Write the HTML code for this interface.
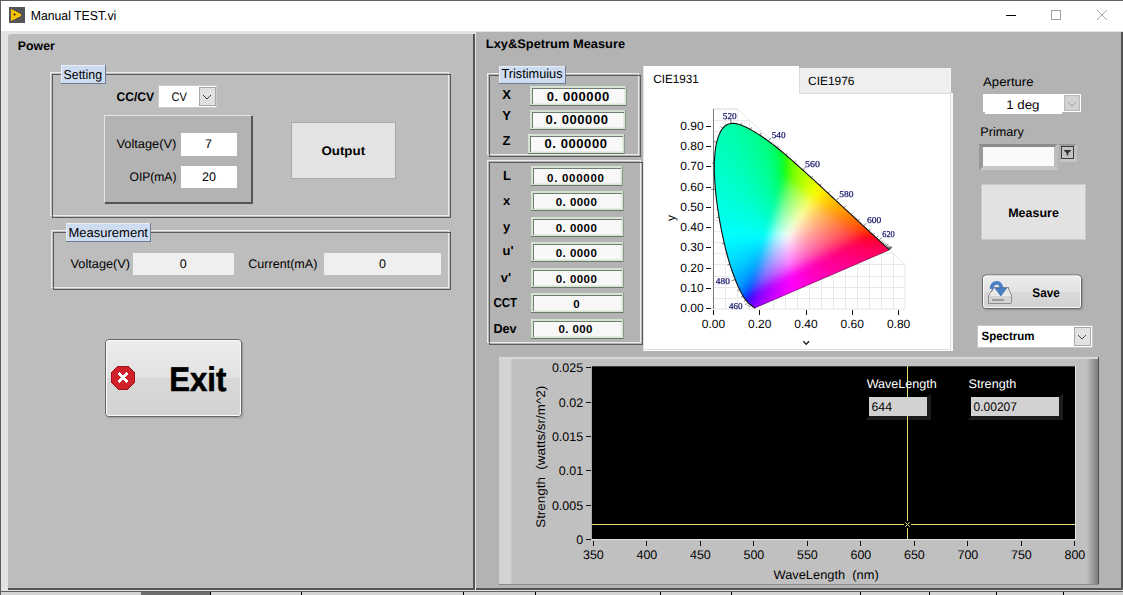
<!DOCTYPE html>
<html><head><meta charset="utf-8"><style>
html,body{margin:0;padding:0;width:1123px;height:595px;overflow:hidden;background:#e3e3e3}
svg{position:absolute;left:0;top:0}
#cie{position:absolute;left:643px;top:93px}
</style></head><body>
<svg width="1123" height="595" viewBox="0 0 1123 595" shape-rendering="crispEdges" text-rendering="geometricPrecision">
<rect x="0" y="0" width="1123" height="595" fill="#e3e3e3" />
<rect x="0" y="0" width="1123" height="31" fill="#ffffff" />
<rect x="0" y="0" width="1123" height="1" fill="#5f5f5f" />
<rect x="0" y="0" width="1" height="595" fill="#5f5f5f" />
<rect x="9" y="7" width="16" height="16" fill="#555555" />
<path d="M10.8 8.6 L22.4 15 L10.8 21.4 Z" fill="#f5c400"/>
<rect x="13" y="14" width="3" height="1" fill="#6a5a20" />
<rect x="14" y="13" width="1" height="3" fill="#6a5a20" />
<text x="30.70" y="19.7" font-size="13" fill="#000" font-family='"Liberation Sans",sans-serif' textLength="85.60" lengthAdjust="spacingAndGlyphs">Manual TEST.vi</text>
<rect x="1006" y="15" width="10" height="1" fill="#000" />
<rect x="1051.5" y="10.5" width="9" height="9" fill="none" stroke="#a0a0a0" stroke-width="1"/>
<line x1="1097" y1="10" x2="1107" y2="20" stroke="#a8a8a8" stroke-width="1" shape-rendering="geometricPrecision"/>
<line x1="1107" y1="10" x2="1097" y2="20" stroke="#a8a8a8" stroke-width="1" shape-rendering="geometricPrecision"/>
<rect x="0" y="591" width="1123" height="1" fill="#5f5f5f" />
<rect x="1" y="592" width="1122" height="3" fill="#d4d4d4" />
<rect x="141" y="592" width="69" height="3" fill="#6e6e6e" />
<rect x="210" y="592" width="1" height="3" fill="#000" />
<rect x="301" y="592" width="1" height="3" fill="#000" />
<rect x="463" y="592" width="1" height="3" fill="#000" />
<rect x="535" y="592" width="1" height="3" fill="#000" />
<rect x="660" y="592" width="1" height="3" fill="#000" />
<rect x="731" y="592" width="1" height="3" fill="#000" />
<rect x="860" y="592" width="1" height="3" fill="#000" />
<rect x="929" y="592" width="1" height="3" fill="#000" />
<rect x="996" y="592" width="1" height="3" fill="#000" />
<rect x="1063" y="592" width="1" height="3" fill="#000" />
<rect x="8" y="34" width="465" height="554" fill="#bdbdbd" rx="3" shape-rendering="geometricPrecision"/>
<rect x="8" y="40" width="465" height="548" fill="#bdbdbd" />
<rect x="14" y="34" width="459" height="10" fill="#bdbdbd" />
<rect x="473" y="34" width="2" height="557" fill="#555555" />
<rect x="475" y="32" width="1" height="559" fill="#e3e3e3" />
<rect x="8" y="588" width="467" height="2" fill="#555555" />
<rect x="8" y="590" width="1115" height="1" fill="#e3e3e3" />
<text x="17.80" y="49.9" font-size="12.5" font-weight="bold" fill="#000" font-family='"Liberation Sans",sans-serif' textLength="37.01" lengthAdjust="spacingAndGlyphs">Power</text>
<rect x="50" y="72" width="398" height="1" fill="#ececec" />
<rect x="50" y="72" width="1" height="143" fill="#ececec" />
<rect x="50" y="215" width="399" height="1" fill="#ececec" />
<rect x="448" y="72" width="1" height="143" fill="#ececec" />
<rect x="52" y="74" width="398" height="1" fill="#5a5a5a" />
<rect x="52" y="74" width="1" height="143" fill="#5a5a5a" />
<rect x="52" y="217" width="399" height="1" fill="#5a5a5a" />
<rect x="450" y="74" width="1" height="143" fill="#5a5a5a" />
<rect x="61" y="65" width="45" height="19" fill="#cddcf0" />
<rect x="61" y="65" width="45" height="1" fill="#e8eff9" />
<rect x="61" y="65" width="1" height="19" fill="#e8eff9" />
<rect x="61" y="83" width="45" height="1" fill="#6f7d94" />
<rect x="105" y="65" width="1" height="19" fill="#6f7d94" />
<text x="63.60" y="78.9" font-size="13" fill="#000" font-family='"Liberation Sans",sans-serif' textLength="38.42" lengthAdjust="spacingAndGlyphs">Setting</text>
<text x="116.40" y="100.7" font-size="12.5" font-weight="bold" fill="#000" font-family='"Liberation Sans",sans-serif' textLength="37.69" lengthAdjust="spacingAndGlyphs">CC/CV</text>
<rect x="158" y="85" width="59" height="23" fill="#cacaca" />
<rect x="159" y="86" width="57" height="21" fill="#ffffff" />
<rect x="199" y="87" width="17" height="19" fill="#a8a8a8" />
<rect x="200" y="88" width="15" height="17" fill="#e1e1e1" />
<path d="M203 95 L207 99 L211 95" fill="none" stroke="#404040" stroke-width="1"/>
<text x="171.50" y="100.8" font-size="12.5" fill="#000" font-family='"Liberation Sans",sans-serif' textLength="15.41" lengthAdjust="spacingAndGlyphs">CV</text>
<rect x="104" y="115" width="149" height="89" fill="#b3b3b3" />
<rect x="104" y="115" width="147" height="1" fill="#e4e4e4" />
<rect x="104" y="115" width="1" height="87" fill="#e4e4e4" />
<rect x="105" y="202" width="148" height="2" fill="#555555" />
<rect x="251" y="116" width="2" height="88" fill="#555555" />
<text x="116.40" y="148.3" font-size="12.5" fill="#000" font-family='"Liberation Sans",sans-serif' textLength="60.02" lengthAdjust="spacingAndGlyphs">Voltage(V)</text>
<rect x="181" y="133" width="56" height="23" fill="#ffffff" />
<text x="205.03" y="148.3" font-size="12.5" fill="#000" font-family='"Liberation Sans",sans-serif' textLength="6.95" lengthAdjust="spacingAndGlyphs">7</text>
<text x="129.50" y="180.9" font-size="12.5" fill="#000" font-family='"Liberation Sans",sans-serif' textLength="46.91" lengthAdjust="spacingAndGlyphs">OIP(mA)</text>
<rect x="181" y="166" width="56" height="22" fill="#ffffff" />
<text x="202.05" y="180.9" font-size="12.5" fill="#000" font-family='"Liberation Sans",sans-serif' textLength="13.90" lengthAdjust="spacingAndGlyphs">20</text>
<rect x="291" y="122" width="105" height="57" fill="#a9a9a9" />
<rect x="292" y="123" width="103" height="55" fill="#e3e3e3" />
<text x="321.40" y="155" font-size="12.5" font-weight="bold" fill="#000" font-family='"Liberation Sans",sans-serif' textLength="43.70" lengthAdjust="spacingAndGlyphs">Output</text>
<rect x="51" y="230" width="397" height="1" fill="#ececec" />
<rect x="51" y="230" width="1" height="57" fill="#ececec" />
<rect x="51" y="287" width="398" height="1" fill="#ececec" />
<rect x="448" y="230" width="1" height="57" fill="#ececec" />
<rect x="53" y="232" width="397" height="1" fill="#5a5a5a" />
<rect x="53" y="232" width="1" height="57" fill="#5a5a5a" />
<rect x="53" y="289" width="398" height="1" fill="#5a5a5a" />
<rect x="450" y="232" width="1" height="57" fill="#5a5a5a" />
<rect x="66" y="223" width="85" height="19" fill="#cddcf0" />
<rect x="66" y="223" width="85" height="1" fill="#e8eff9" />
<rect x="66" y="223" width="1" height="19" fill="#e8eff9" />
<rect x="66" y="241" width="85" height="1" fill="#6f7d94" />
<rect x="150" y="223" width="1" height="19" fill="#6f7d94" />
<text x="68.50" y="236.9" font-size="13" fill="#000" font-family='"Liberation Sans",sans-serif' textLength="79.48" lengthAdjust="spacingAndGlyphs">Measurement</text>
<text x="70.50" y="268" font-size="12.5" fill="#000" font-family='"Liberation Sans",sans-serif' textLength="59.62" lengthAdjust="spacingAndGlyphs">Voltage(V)</text>
<rect x="133" y="253" width="101" height="22" fill="#efefef" />
<text x="179.72" y="268" font-size="12.5" fill="#000" font-family='"Liberation Sans",sans-serif' textLength="6.95" lengthAdjust="spacingAndGlyphs">0</text>
<text x="248.20" y="268" font-size="12.5" fill="#000" font-family='"Liberation Sans",sans-serif' textLength="69.20" lengthAdjust="spacingAndGlyphs">Current(mA)</text>
<rect x="324" y="253" width="117" height="22" fill="#efefef" />
<text x="378.92" y="268" font-size="12.5" fill="#000" font-family='"Liberation Sans",sans-serif' textLength="6.95" lengthAdjust="spacingAndGlyphs">0</text>
<defs><linearGradient id="gbtn" x1="0" y1="0" x2="0" y2="1"><stop offset="0" stop-color="#ececec"/><stop offset="0.5" stop-color="#e2e2e2"/><stop offset="0.5" stop-color="#d9d9d9"/><stop offset="1" stop-color="#d2d2d2"/></linearGradient></defs>
<rect x="106" y="341" width="138" height="78" rx="4" fill="#000" opacity="0.06" shape-rendering="geometricPrecision"/>
<rect x="106" y="340" width="137" height="78" rx="4" fill="#000" opacity="0.08" shape-rendering="geometricPrecision"/>
<rect x="105.5" y="339.5" width="136" height="77" rx="3.5" fill="url(#gbtn)" stroke="#666" stroke-width="1" shape-rendering="geometricPrecision"/>
<rect x="106.5" y="340.5" width="134" height="75" rx="2.5" fill="none" stroke="#fafafa" stroke-width="1" shape-rendering="geometricPrecision"/>
<path d="M118.2 366 L127.8 366 L134.6 372.8 L134.6 382.4 L127.8 389.2 L118.2 389.2 L111.4 382.4 L111.4 372.8 Z" fill="#d0202a" stroke="#a01018" stroke-width="1"/>
<path d="M118.5 373 L127.5 382 M127.5 373 L118.5 382" stroke="#fff" stroke-width="2.6"/>
<g stroke="#000" stroke-width="0.6">
<text x="169.30" y="390.7" font-size="34" font-weight="bold" fill="#000" font-family='"Liberation Sans",sans-serif' textLength="57.01" lengthAdjust="spacingAndGlyphs">Exit</text>
</g>
<rect x="476" y="32" width="646" height="556" fill="#b3b3b3" />
<rect x="1121" y="32" width="2" height="557" fill="#555555" />
<rect x="476" y="588" width="647" height="2" fill="#555555" />
<text x="485.80" y="47.9" font-size="12.5" font-weight="bold" fill="#000" font-family='"Liberation Sans",sans-serif' textLength="139.31" lengthAdjust="spacingAndGlyphs">Lxy&amp;Spetrum Measure</text>
<rect x="487" y="73" width="151" height="1" fill="#ececec" />
<rect x="487" y="73" width="1" height="81" fill="#ececec" />
<rect x="487" y="154" width="152" height="1" fill="#ececec" />
<rect x="638" y="73" width="1" height="81" fill="#ececec" />
<rect x="489" y="75" width="151" height="1" fill="#5a5a5a" />
<rect x="489" y="75" width="1" height="81" fill="#5a5a5a" />
<rect x="489" y="156" width="152" height="1" fill="#5a5a5a" />
<rect x="640" y="75" width="1" height="81" fill="#5a5a5a" />
<rect x="499" y="66" width="67" height="18" fill="#cddcf0" />
<rect x="499" y="66" width="67" height="1" fill="#e8eff9" />
<rect x="499" y="66" width="1" height="18" fill="#e8eff9" />
<rect x="499" y="83" width="67" height="1" fill="#6f7d94" />
<rect x="565" y="66" width="1" height="18" fill="#6f7d94" />
<text x="501.50" y="78.1" font-size="13" fill="#000" font-family='"Liberation Sans",sans-serif' textLength="61.00" lengthAdjust="spacingAndGlyphs">Tristimuius</text>
<text x="502.18" y="98.9" font-size="13" font-weight="bold" fill="#000" font-family='"Liberation Sans",sans-serif' textLength="8.67" lengthAdjust="spacingAndGlyphs">X</text>
<rect x="530" y="86" width="97" height="20" fill="#d6e3d3" />
<rect x="530" y="105" width="97" height="1" fill="#6a7a6a" />
<rect x="626" y="86" width="1" height="20" fill="#8a9a8a" />
<rect x="532" y="88" width="93" height="16" fill="#6e7e6e" />
<rect x="533" y="89" width="92" height="15" fill="#e6eee4" />
<rect x="533" y="89" width="91" height="14" fill="#f8f8f8" />
<text x="502.18" y="120.4" font-size="13" font-weight="bold" fill="#000" font-family='"Liberation Sans",sans-serif' textLength="8.67" lengthAdjust="spacingAndGlyphs">Y</text>
<rect x="530" y="110" width="96" height="20" fill="#d6e3d3" />
<rect x="530" y="129" width="96" height="1" fill="#6a7a6a" />
<rect x="625" y="110" width="1" height="20" fill="#8a9a8a" />
<rect x="532" y="112" width="92" height="16" fill="#6e7e6e" />
<rect x="533" y="113" width="91" height="15" fill="#e6eee4" />
<rect x="533" y="113" width="90" height="14" fill="#f8f8f8" />
<text x="502.52" y="144.7" font-size="13" font-weight="bold" fill="#000" font-family='"Liberation Sans",sans-serif' textLength="7.94" lengthAdjust="spacingAndGlyphs">Z</text>
<rect x="528" y="134" width="97" height="20" fill="#d6e3d3" />
<rect x="528" y="153" width="97" height="1" fill="#6a7a6a" />
<rect x="624" y="134" width="1" height="20" fill="#8a9a8a" />
<rect x="530" y="136" width="93" height="16" fill="#6e7e6e" />
<rect x="531" y="137" width="92" height="15" fill="#e6eee4" />
<rect x="531" y="137" width="91" height="14" fill="#f8f8f8" />
<rect x="487" y="160" width="153" height="1" fill="#ececec" />
<rect x="487" y="160" width="1" height="182" fill="#ececec" />
<rect x="487" y="342" width="154" height="1" fill="#ececec" />
<rect x="640" y="160" width="1" height="182" fill="#ececec" />
<rect x="489" y="162" width="153" height="1" fill="#5a5a5a" />
<rect x="489" y="162" width="1" height="182" fill="#5a5a5a" />
<rect x="489" y="344" width="154" height="1" fill="#5a5a5a" />
<rect x="642" y="162" width="1" height="182" fill="#5a5a5a" />
<text x="503.02" y="179.8" font-size="13" font-weight="bold" fill="#000" font-family='"Liberation Sans",sans-serif' textLength="7.94" lengthAdjust="spacingAndGlyphs">L</text>
<rect x="531" y="166" width="92" height="20" fill="#d6e3d3" />
<rect x="531" y="185" width="92" height="1" fill="#6a7a6a" />
<rect x="622" y="166" width="1" height="20" fill="#8a9a8a" />
<rect x="533" y="168" width="88" height="16" fill="#6e7e6e" />
<rect x="534" y="169" width="87" height="15" fill="#e6eee4" />
<rect x="534" y="169" width="86" height="14" fill="#f8f8f8" />
<text x="503.07" y="204.5" font-size="13" font-weight="bold" fill="#000" font-family='"Liberation Sans",sans-serif' textLength="7.23" lengthAdjust="spacingAndGlyphs">x</text>
<rect x="531" y="191" width="93" height="20" fill="#d6e3d3" />
<rect x="531" y="210" width="93" height="1" fill="#6a7a6a" />
<rect x="623" y="191" width="1" height="20" fill="#8a9a8a" />
<rect x="533" y="193" width="89" height="16" fill="#6e7e6e" />
<rect x="534" y="194" width="88" height="15" fill="#e6eee4" />
<rect x="534" y="194" width="87" height="14" fill="#f8f8f8" />
<text x="502.88" y="230.7" font-size="13" font-weight="bold" fill="#000" font-family='"Liberation Sans",sans-serif' textLength="7.23" lengthAdjust="spacingAndGlyphs">y</text>
<rect x="531" y="217" width="93" height="20" fill="#d6e3d3" />
<rect x="531" y="236" width="93" height="1" fill="#6a7a6a" />
<rect x="623" y="217" width="1" height="20" fill="#8a9a8a" />
<rect x="533" y="219" width="89" height="16" fill="#6e7e6e" />
<rect x="534" y="220" width="88" height="15" fill="#e6eee4" />
<rect x="534" y="220" width="87" height="14" fill="#f8f8f8" />
<text x="502.48" y="255.2" font-size="13" font-weight="bold" fill="#000" font-family='"Liberation Sans",sans-serif' textLength="11.03" lengthAdjust="spacingAndGlyphs">u'</text>
<rect x="531" y="242" width="93" height="20" fill="#d6e3d3" />
<rect x="531" y="261" width="93" height="1" fill="#6a7a6a" />
<rect x="623" y="242" width="1" height="20" fill="#8a9a8a" />
<rect x="533" y="244" width="89" height="16" fill="#6e7e6e" />
<rect x="534" y="245" width="88" height="15" fill="#e6eee4" />
<rect x="534" y="245" width="87" height="14" fill="#f8f8f8" />
<text x="500.85" y="281.8" font-size="13" font-weight="bold" fill="#000" font-family='"Liberation Sans",sans-serif' textLength="10.32" lengthAdjust="spacingAndGlyphs">v'</text>
<rect x="531" y="268" width="93" height="20" fill="#d6e3d3" />
<rect x="531" y="287" width="93" height="1" fill="#6a7a6a" />
<rect x="623" y="268" width="1" height="20" fill="#8a9a8a" />
<rect x="533" y="270" width="89" height="16" fill="#6e7e6e" />
<rect x="534" y="271" width="88" height="15" fill="#e6eee4" />
<rect x="534" y="271" width="87" height="14" fill="#f8f8f8" />
<text x="493.40" y="306.5" font-size="13" font-weight="bold" fill="#000" font-family='"Liberation Sans",sans-serif' textLength="23.62" lengthAdjust="spacingAndGlyphs">CCT</text>
<rect x="531" y="293" width="93" height="20" fill="#d6e3d3" />
<rect x="531" y="312" width="93" height="1" fill="#6a7a6a" />
<rect x="623" y="293" width="1" height="20" fill="#8a9a8a" />
<rect x="533" y="295" width="89" height="16" fill="#6e7e6e" />
<rect x="534" y="296" width="88" height="15" fill="#e6eee4" />
<rect x="534" y="296" width="87" height="14" fill="#f8f8f8" />
<text x="493.40" y="332.6" font-size="13" font-weight="bold" fill="#000" font-family='"Liberation Sans",sans-serif' textLength="23.20" lengthAdjust="spacingAndGlyphs">Dev</text>
<rect x="531" y="319" width="93" height="20" fill="#d6e3d3" />
<rect x="531" y="338" width="93" height="1" fill="#6a7a6a" />
<rect x="623" y="319" width="1" height="20" fill="#8a9a8a" />
<rect x="533" y="321" width="89" height="16" fill="#6e7e6e" />
<rect x="534" y="322" width="88" height="15" fill="#e6eee4" />
<rect x="534" y="322" width="87" height="14" fill="#f8f8f8" />
<text x="546.80" y="100.6" font-size="13" font-weight="bold" fill="#000" font-family='"Liberation Sans",sans-serif' letter-spacing="0.57">0. 000000</text>
<text x="545.50" y="124.2" font-size="13" font-weight="bold" fill="#000" font-family='"Liberation Sans",sans-serif' letter-spacing="0.58">0. 000000</text>
<text x="544.50" y="148.4" font-size="13" font-weight="bold" fill="#000" font-family='"Liberation Sans",sans-serif' letter-spacing="0.58">0. 000000</text>
<text x="547.00" y="181.5" font-size="11.5" font-weight="bold" fill="#000" font-family='"Liberation Sans",sans-serif' letter-spacing="0.73">0. 000000</text>
<text x="555.70" y="205.7" font-size="11.5" font-weight="bold" fill="#000" font-family='"Liberation Sans",sans-serif' letter-spacing="0.47">0. 0000</text>
<text x="555.70" y="231.5" font-size="11.5" font-weight="bold" fill="#000" font-family='"Liberation Sans",sans-serif' letter-spacing="0.47">0. 0000</text>
<text x="555.70" y="256.5" font-size="11.5" font-weight="bold" fill="#000" font-family='"Liberation Sans",sans-serif' letter-spacing="0.47">0. 0000</text>
<text x="555.70" y="282.5" font-size="11.5" font-weight="bold" fill="#000" font-family='"Liberation Sans",sans-serif' letter-spacing="0.47">0. 0000</text>
<text x="573.30" y="307.5" font-size="11.5" font-weight="bold" fill="#000" font-family='"Liberation Sans",sans-serif' textLength="6.40" lengthAdjust="spacingAndGlyphs">0</text>
<text x="558.50" y="333" font-size="11.5" font-weight="bold" fill="#000" font-family='"Liberation Sans",sans-serif' letter-spacing="0.40">0. 000</text>
<rect x="643" y="66" width="156" height="27" fill="#ffffff" />
<rect x="643" y="93" width="310" height="258" fill="#fbfbfb" />
<rect x="643" y="93" width="307" height="256" fill="#ffffff" />
<rect x="643" y="349" width="308" height="1" fill="#dedede" />
<rect x="643" y="66" width="1" height="284" fill="#e4e4e4" />
<rect x="799" y="68" width="152" height="25" fill="#efefef" />
<rect x="950" y="68" width="1" height="25" fill="#f6f6f6" />
<rect x="799" y="68" width="1" height="26" fill="#dcdcdc" />
<rect x="799" y="93" width="152" height="1" fill="#dcdcdc" />
<rect x="950" y="93" width="1" height="257" fill="#dedede" />
<text x="653.20" y="82.9" font-size="12" fill="#000" font-family='"Liberation Sans",sans-serif' textLength="45.60" lengthAdjust="spacingAndGlyphs">CIE1931</text>
<text x="808.00" y="84.8" font-size="12" fill="#000" font-family='"Liberation Sans",sans-serif' textLength="46.50" lengthAdjust="spacingAndGlyphs">CIE1976</text>
<rect x="713" y="109" width="1" height="200" fill="#808080" />
<rect x="706" y="308" width="5" height="1" fill="#111" />
<text x="680.35" y="312.3" font-size="12" fill="#000" font-family='"Liberation Sans",sans-serif' textLength="23.36" lengthAdjust="spacingAndGlyphs">0.00</text>
<rect x="706" y="288" width="5" height="1" fill="#111" />
<text x="680.35" y="292.3" font-size="12" fill="#000" font-family='"Liberation Sans",sans-serif' textLength="23.36" lengthAdjust="spacingAndGlyphs">0.10</text>
<rect x="706" y="268" width="5" height="1" fill="#111" />
<text x="680.35" y="272.3" font-size="12" fill="#000" font-family='"Liberation Sans",sans-serif' textLength="23.36" lengthAdjust="spacingAndGlyphs">0.20</text>
<rect x="706" y="247" width="5" height="1" fill="#111" />
<text x="680.35" y="251.3" font-size="12" fill="#000" font-family='"Liberation Sans",sans-serif' textLength="23.36" lengthAdjust="spacingAndGlyphs">0.30</text>
<rect x="706" y="227" width="5" height="1" fill="#111" />
<text x="680.35" y="231.3" font-size="12" fill="#000" font-family='"Liberation Sans",sans-serif' textLength="23.36" lengthAdjust="spacingAndGlyphs">0.40</text>
<rect x="706" y="207" width="5" height="1" fill="#111" />
<text x="680.35" y="211.3" font-size="12" fill="#000" font-family='"Liberation Sans",sans-serif' textLength="23.36" lengthAdjust="spacingAndGlyphs">0.50</text>
<rect x="706" y="187" width="5" height="1" fill="#111" />
<text x="680.35" y="191.3" font-size="12" fill="#000" font-family='"Liberation Sans",sans-serif' textLength="23.36" lengthAdjust="spacingAndGlyphs">0.60</text>
<rect x="706" y="166" width="5" height="1" fill="#111" />
<text x="680.35" y="170.3" font-size="12" fill="#000" font-family='"Liberation Sans",sans-serif' textLength="23.36" lengthAdjust="spacingAndGlyphs">0.70</text>
<rect x="706" y="146" width="5" height="1" fill="#111" />
<text x="680.35" y="150.3" font-size="12" fill="#000" font-family='"Liberation Sans",sans-serif' textLength="23.36" lengthAdjust="spacingAndGlyphs">0.80</text>
<rect x="706" y="126" width="5" height="1" fill="#111" />
<text x="680.35" y="130.3" font-size="12" fill="#000" font-family='"Liberation Sans",sans-serif' textLength="23.36" lengthAdjust="spacingAndGlyphs">0.90</text>
<rect x="713" y="310" width="1" height="5" fill="#111" />
<text x="701.73" y="328" font-size="12" fill="#000" font-family='"Liberation Sans",sans-serif' textLength="23.36" lengthAdjust="spacingAndGlyphs">0.00</text>
<rect x="759" y="310" width="1" height="5" fill="#111" />
<text x="748.02" y="328" font-size="12" fill="#000" font-family='"Liberation Sans",sans-serif' textLength="23.36" lengthAdjust="spacingAndGlyphs">0.20</text>
<rect x="806" y="310" width="1" height="5" fill="#111" />
<text x="794.33" y="328" font-size="12" fill="#000" font-family='"Liberation Sans",sans-serif' textLength="23.36" lengthAdjust="spacingAndGlyphs">0.40</text>
<rect x="852" y="310" width="1" height="5" fill="#111" />
<text x="840.62" y="328" font-size="12" fill="#000" font-family='"Liberation Sans",sans-serif' textLength="23.36" lengthAdjust="spacingAndGlyphs">0.60</text>
<rect x="898" y="310" width="1" height="5" fill="#111" />
<text x="886.92" y="328" font-size="12" fill="#000" font-family='"Liberation Sans",sans-serif' textLength="23.36" lengthAdjust="spacingAndGlyphs">0.80</text>
<g transform="translate(674.5,218) rotate(-90)">
<text x="-3.00" y="0" font-size="12" fill="#000" font-family='"Liberation Sans",sans-serif' textLength="6.00" lengthAdjust="spacingAndGlyphs">y</text>
</g>
<path d="M803.3 341.2 L806.2 344.2 L809.1 341.2" fill="none" stroke="#222" stroke-width="1.4" shape-rendering="geometricPrecision"/>
<text x="983.10" y="85.7" font-size="12.5" fill="#000" font-family='"Liberation Sans",sans-serif' textLength="50.49" lengthAdjust="spacingAndGlyphs">Aperture</text>
<rect x="983" y="94" width="98" height="18" fill="#ffffff" />
<rect x="985" y="112" width="77" height="2" fill="#ffffff" />
<rect x="1064" y="95" width="16" height="16" fill="#b9b9b9" />
<rect x="1065" y="96" width="14" height="14" fill="#d3d3d3" />
<path d="M1067.5 102 L1072 106 L1076.5 102" fill="none" stroke="#a0a0a0" stroke-width="1" shape-rendering="geometricPrecision"/>
<text x="1006.20" y="108.8" font-size="12.5" fill="#000" font-family='"Liberation Sans",sans-serif' textLength="33.28" lengthAdjust="spacingAndGlyphs">1 deg</text>
<text x="980.30" y="136.2" font-size="12.5" fill="#000" font-family='"Liberation Sans",sans-serif' textLength="43.50" lengthAdjust="spacingAndGlyphs">Primary</text>
<rect x="979" y="144" width="79" height="26" fill="#b4b4b4" />
<path d="M979 144 L1058 144 L1054 147 L983 147 Z" fill="#8c8c8c"/>
<path d="M979 144 L983 147 L983 166 L979 170 Z" fill="#989898"/>
<path d="M979 170 L983 166 L1054 166 L1058 170 Z" fill="#c8c8c8"/>
<path d="M1058 144 L1058 170 L1054 166 L1054 147 Z" fill="#bcbcbc"/>
<rect x="983" y="147" width="71" height="19" fill="#fafafa" />
<rect x="1058" y="144" width="19" height="18" fill="#b4b4b4" />
<path d="M1058 144 L1077 144 L1074 146 L1061 146 Z" fill="#989898"/>
<path d="M1058 162 L1061 159 L1074 159 L1077 162 Z" fill="#c6c6c6"/>
<path d="M1077 144 L1077 162 L1074 159 L1074 146 Z" fill="#c0c0c0"/>
<rect x="1061" y="146" width="13" height="13" fill="#3c3c3c" />
<rect x="1062" y="147" width="11" height="11" fill="#c2c2c2" />
<path d="M1063.5 150 L1071.5 150 L1068.3 153.2 L1068.3 155.5 L1066.7 155.5 L1066.7 153.2 Z" fill="#333" shape-rendering="geometricPrecision"/>
<rect x="981" y="184" width="105" height="56" fill="#c9c9c9" />
<rect x="982" y="185" width="103" height="54" fill="#e2e2e2" />
<text x="1008.15" y="216.7" font-size="12.5" font-weight="bold" fill="#000" font-family='"Liberation Sans",sans-serif' textLength="50.72" lengthAdjust="spacingAndGlyphs">Measure</text>
<rect x="983" y="277" width="101" height="34" rx="4" fill="#000" opacity="0.06" shape-rendering="geometricPrecision"/>
<rect x="983" y="276" width="100" height="34" rx="4" fill="#000" opacity="0.08" shape-rendering="geometricPrecision"/>
<rect x="982.5" y="275" width="99" height="33.5" rx="3.5" fill="url(#gbtn)" stroke="#666" stroke-width="1" shape-rendering="geometricPrecision"/>
<rect x="983.5" y="276" width="97" height="31.5" rx="2.5" fill="none" stroke="#fafafa" stroke-width="1" shape-rendering="geometricPrecision"/>
<path d="M994 287.5 L1008 287.5 L1011.5 295.5 L1011.5 302 Q1011.5 303.5 1010 303.5 L990 303.5 Q988.5 303.5 988.5 302 L988.5 295.5 Z" fill="#e8e8e8" stroke="#8c8c8c" stroke-width="1"/>
<rect x="989" y="296" width="22" height="7" fill="#d4d4d4" />
<rect x="992" y="299" width="12" height="1.5" fill="#9a9a9a" />
<path d="M991.5 289 C992 282 1000 280 1001.5 288" fill="none" stroke="#4a7fc4" stroke-width="3.6" shape-rendering="geometricPrecision"/>
<path d="M994.8 288 L1006.8 288 L1000.8 296 Z" fill="#4a7fc4" stroke="#3a6ab0" stroke-width="0.6" shape-rendering="geometricPrecision"/>
<text x="1032.30" y="297.4" font-size="12.5" font-weight="bold" fill="#000" font-family='"Liberation Sans",sans-serif' textLength="27.49" lengthAdjust="spacingAndGlyphs">Save</text>
<rect x="977" y="325" width="116" height="23" fill="#c4c4c4" />
<rect x="978" y="326" width="114" height="21" fill="#ffffff" />
<rect x="1074" y="327" width="17" height="19" fill="#a8a8a8" />
<rect x="1075" y="328" width="15" height="17" fill="#e2e2e2" />
<path d="M1078 335 L1082 339 L1086 335" fill="none" stroke="#505050" stroke-width="1" shape-rendering="geometricPrecision"/>
<text x="981.50" y="339.8" font-size="12" font-weight="bold" fill="#000" font-family='"Liberation Sans",sans-serif' textLength="52.90" lengthAdjust="spacingAndGlyphs">Spectrum</text>
<defs><linearGradient id="gfl" x1="0" y1="0" x2="1" y2="0"><stop offset="0" stop-color="#d2d2d2"/><stop offset="0.8" stop-color="#d4d4d4"/><stop offset="1" stop-color="#c8c8c8"/></linearGradient><linearGradient id="gfr" x1="0" y1="0" x2="1" y2="0"><stop offset="0" stop-color="#c4c4c4"/><stop offset="1" stop-color="#7c7c7c"/></linearGradient></defs>
<rect x="499" y="357" width="600" height="228" fill="#c0c0c0" />
<rect x="499" y="357" width="13" height="228" fill="url(#gfl)" />
<rect x="1086" y="357" width="12" height="228" fill="url(#gfr)" />
<rect x="499" y="357" width="599" height="2" fill="#d8d8d8" />
<rect x="1098" y="357" width="1" height="228" fill="#505050" />
<rect x="499" y="584" width="600" height="1" fill="#8a8a8a" />
<rect x="591" y="366" width="1" height="173" fill="#a8a8a8" />
<rect x="592" y="366" width="483" height="173" fill="#000000" />
<rect x="592" y="366" width="483" height="1" fill="#3a3a3a" />
<rect x="1075" y="366" width="1" height="174" fill="#e4e4e4" />
<rect x="592" y="539" width="484" height="1" fill="#e0e0e0" />
<rect x="586" y="539" width="5" height="1" fill="#111" />
<text x="576.25" y="543.5" font-size="12.5" fill="#000" font-family='"Liberation Sans",sans-serif' textLength="6.95" lengthAdjust="spacingAndGlyphs">0</text>
<rect x="586" y="505" width="5" height="1" fill="#111" />
<text x="551.90" y="509.5" font-size="12.5" fill="#000" font-family='"Liberation Sans",sans-serif' textLength="31.28" lengthAdjust="spacingAndGlyphs">0.005</text>
<rect x="586" y="470" width="5" height="1" fill="#111" />
<text x="558.85" y="474.5" font-size="12.5" fill="#000" font-family='"Liberation Sans",sans-serif' textLength="24.33" lengthAdjust="spacingAndGlyphs">0.01</text>
<rect x="586" y="436" width="5" height="1" fill="#111" />
<text x="551.90" y="440.5" font-size="12.5" fill="#000" font-family='"Liberation Sans",sans-serif' textLength="31.28" lengthAdjust="spacingAndGlyphs">0.015</text>
<rect x="586" y="402" width="5" height="1" fill="#111" />
<text x="558.85" y="406.5" font-size="12.5" fill="#000" font-family='"Liberation Sans",sans-serif' textLength="24.33" lengthAdjust="spacingAndGlyphs">0.02</text>
<rect x="586" y="367" width="5" height="1" fill="#111" />
<text x="551.90" y="371.5" font-size="12.5" fill="#000" font-family='"Liberation Sans",sans-serif' textLength="31.28" lengthAdjust="spacingAndGlyphs">0.025</text>
<rect x="593" y="541" width="1" height="5" fill="#111" />
<text x="582.98" y="559" font-size="12.5" fill="#000" font-family='"Liberation Sans",sans-serif' textLength="20.85" lengthAdjust="spacingAndGlyphs">350</text>
<rect x="646" y="541" width="1" height="5" fill="#111" />
<text x="636.48" y="559" font-size="12.5" fill="#000" font-family='"Liberation Sans",sans-serif' textLength="20.85" lengthAdjust="spacingAndGlyphs">400</text>
<rect x="700" y="541" width="1" height="5" fill="#111" />
<text x="689.98" y="559" font-size="12.5" fill="#000" font-family='"Liberation Sans",sans-serif' textLength="20.85" lengthAdjust="spacingAndGlyphs">450</text>
<rect x="753" y="541" width="1" height="5" fill="#111" />
<text x="743.48" y="559" font-size="12.5" fill="#000" font-family='"Liberation Sans",sans-serif' textLength="20.85" lengthAdjust="spacingAndGlyphs">500</text>
<rect x="807" y="541" width="1" height="5" fill="#111" />
<text x="796.98" y="559" font-size="12.5" fill="#000" font-family='"Liberation Sans",sans-serif' textLength="20.85" lengthAdjust="spacingAndGlyphs">550</text>
<rect x="860" y="541" width="1" height="5" fill="#111" />
<text x="850.48" y="559" font-size="12.5" fill="#000" font-family='"Liberation Sans",sans-serif' textLength="20.85" lengthAdjust="spacingAndGlyphs">600</text>
<rect x="914" y="541" width="1" height="5" fill="#111" />
<text x="903.98" y="559" font-size="12.5" fill="#000" font-family='"Liberation Sans",sans-serif' textLength="20.85" lengthAdjust="spacingAndGlyphs">650</text>
<rect x="967" y="541" width="1" height="5" fill="#111" />
<text x="957.48" y="559" font-size="12.5" fill="#000" font-family='"Liberation Sans",sans-serif' textLength="20.85" lengthAdjust="spacingAndGlyphs">700</text>
<rect x="1021" y="541" width="1" height="5" fill="#111" />
<text x="1010.98" y="559" font-size="12.5" fill="#000" font-family='"Liberation Sans",sans-serif' textLength="20.85" lengthAdjust="spacingAndGlyphs">750</text>
<rect x="1074" y="541" width="1" height="5" fill="#111" />
<text x="1064.48" y="559" font-size="12.5" fill="#000" font-family='"Liberation Sans",sans-serif' textLength="20.85" lengthAdjust="spacingAndGlyphs">800</text>
<text x="773.50" y="578.5" font-size="12.5" fill="#000" font-family='"Liberation Sans",sans-serif' textLength="105.20" lengthAdjust="spacingAndGlyphs">WaveLength  (nm)</text>
<g transform="translate(544.7,456.8) rotate(-90)">
<text x="-71.00" y="0" font-size="12.5" fill="#000" font-family='"Liberation Sans",sans-serif' textLength="141.98" lengthAdjust="spacingAndGlyphs">Strength  (watts/sr/m^2)</text>
</g>
<rect x="592" y="524" width="483" height="1" fill="#e8e070" />
<rect x="907" y="366" width="1" height="173" fill="#e8e070" />
<rect x="904" y="522" width="7" height="5" fill="#000" />
<rect x="906" y="521" width="3" height="7" fill="#000" />
<path d="M905.2 522.2 L909.8 526.8 M909.8 522.2 L905.2 526.8" stroke="#e8e070" stroke-width="1" shape-rendering="geometricPrecision"/>
<text x="866.70" y="388.2" font-size="12.5" fill="#ffffff" font-family='"Liberation Sans",sans-serif' textLength="70.12" lengthAdjust="spacingAndGlyphs">WaveLength</text>
<text x="968.50" y="388.2" font-size="12.5" fill="#ffffff" font-family='"Liberation Sans",sans-serif' textLength="47.70" lengthAdjust="spacingAndGlyphs">Strength</text>
<path d="M865 420 L869 416 L927 416 L927 397 L931 393 L931 420 Z" fill="#1c1c1c"/>
<rect x="869" y="397" width="58" height="19" fill="#d2d2d2" />
<rect x="907" y="416" width="1" height="4" fill="#e8e070" />
<path d="M967 420 L971 416 L1059 416 L1059 397 L1063 393 L1063 420 Z" fill="#1c1c1c"/>
<rect x="971" y="397" width="88" height="19" fill="#d2d2d2" />
<text x="871.50" y="410.7" font-size="12.5" fill="#000" font-family='"Liberation Sans",sans-serif' textLength="20.50" lengthAdjust="spacingAndGlyphs">644</text>
<text x="973.50" y="410.7" font-size="12.5" fill="#000" font-family='"Liberation Sans",sans-serif' textLength="43.48" lengthAdjust="spacingAndGlyphs">0.00207</text>
</svg>
<noscript><svg style="position:absolute;left:0;top:0" width="1123" height="595" viewBox="0 0 1123 595" shape-rendering="crispEdges">
<clipPath id="gclip"><polygon points="713.4,309.0 713.4,108.7 737.4,108.7 905.0,264.5 905.0,309.0"/></clipPath><clipPath id="lclip"><polygon points="755.1,307.9 755.0,307.9 754.9,307.9 754.7,307.9 754.5,307.9 754.2,307.7 753.9,307.5 753.4,307.1 752.8,306.6 752.0,305.9 750.9,305.1 749.6,303.9 747.9,302.4 745.9,300.1 743.1,296.1 739.6,289.7 735.3,279.5 729.9,264.3 724.3,243.3 719.0,217.1 715.4,189.2 714.3,163.2 716.7,142.0 722.7,128.2 731.2,123.4 740.8,125.1 750.5,129.6 759.6,135.0 768.4,141.1 777.1,147.8 785.6,154.9 794.2,162.3 802.8,170.0 811.3,177.8 819.8,185.5 828.1,193.2 836.1,200.7 843.9,207.9 851.2,214.6 857.8,220.7 863.6,226.1 868.6,230.8 872.9,234.7 876.3,237.8 879.0,240.4 881.2,242.4 882.9,244.0 884.4,245.4 885.6,246.5 886.6,247.3 887.3,248.0 887.8,248.5 888.2,248.9 888.5,249.1 888.7,249.3 888.9,249.5 889.0,249.7 889.3,249.9 889.4,249.9"/></clipPath>
<polygon points="713.4,309.0 713.4,108.7 737.4,108.7 905.0,264.5 905.0,309.0" fill="none" stroke="#e9e9e9"/>
<path d="M725.5 100V320M737.5 100V320M749.5 100V320M761.5 100V320M773.5 100V320M785.5 100V320M797.5 100V320M809.5 100V320M821.5 100V320M833.5 100V320M845.5 100V320M857.5 100V320M869.5 100V320M881.5 100V320M893.5 100V320M905.5 100V320M700 298.5H920M700 287.5H920M700 276.5H920M700 264.5H920M700 253.5H920M700 242.5H920M700 231.5H920M700 220.5H920M700 209.5H920M700 198.5H920M700 187.5H920M700 175.5H920M700 164.5H920M700 153.5H920M700 142.5H920M700 131.5H920M700 120.5H920M700 109.5H920" stroke="#e9e9e9" clip-path="url(#gclip)"/>
<rect x='713' y='109' width='1' height='200' fill='#7a7a7a'/>
<g clip-path="url(#lclip)">
<rect x="726" y="122" width="4" height="4" fill="#00feab"/>
<rect x="730" y="122" width="4" height="4" fill="#00fea8"/>
<rect x="734" y="122" width="4" height="4" fill="#00fea4"/>
<rect x="738" y="122" width="4" height="4" fill="#00fea0"/>
<rect x="742" y="122" width="4" height="4" fill="#00fe9b"/>
<rect x="718" y="126" width="4" height="4" fill="#00feb3"/>
<rect x="722" y="126" width="4" height="4" fill="#00feb0"/>
<rect x="726" y="126" width="4" height="4" fill="#00fead"/>
<rect x="730" y="126" width="4" height="4" fill="#00fea9"/>
<rect x="734" y="126" width="4" height="4" fill="#00fea6"/>
<rect x="738" y="126" width="4" height="4" fill="#00fea1"/>
<rect x="742" y="126" width="4" height="4" fill="#00fe9d"/>
<rect x="746" y="126" width="4" height="4" fill="#00fe98"/>
<rect x="750" y="126" width="4" height="4" fill="#00fe92"/>
<rect x="718" y="130" width="4" height="4" fill="#00feb5"/>
<rect x="722" y="130" width="4" height="4" fill="#00feb2"/>
<rect x="726" y="130" width="4" height="4" fill="#00feaf"/>
<rect x="730" y="130" width="4" height="4" fill="#00feab"/>
<rect x="734" y="130" width="4" height="4" fill="#00fea8"/>
<rect x="738" y="130" width="4" height="4" fill="#00fea3"/>
<rect x="742" y="130" width="4" height="4" fill="#00fe9f"/>
<rect x="746" y="130" width="4" height="4" fill="#00fe9a"/>
<rect x="750" y="130" width="4" height="4" fill="#00fe94"/>
<rect x="754" y="130" width="4" height="4" fill="#00fe8e"/>
<rect x="718" y="134" width="4" height="4" fill="#00feb7"/>
<rect x="722" y="134" width="4" height="4" fill="#00feb4"/>
<rect x="726" y="134" width="4" height="4" fill="#00feb1"/>
<rect x="730" y="134" width="4" height="4" fill="#00fead"/>
<rect x="734" y="134" width="4" height="4" fill="#00feaa"/>
<rect x="738" y="134" width="4" height="4" fill="#00fea6"/>
<rect x="742" y="134" width="4" height="4" fill="#00fea1"/>
<rect x="746" y="134" width="4" height="4" fill="#00fe9c"/>
<rect x="750" y="134" width="4" height="4" fill="#00fe96"/>
<rect x="754" y="134" width="4" height="4" fill="#00fe90"/>
<rect x="758" y="134" width="4" height="4" fill="#00fe88"/>
<rect x="762" y="134" width="4" height="4" fill="#00fe7f"/>
<rect x="714" y="138" width="4" height="4" fill="#00febb"/>
<rect x="718" y="138" width="4" height="4" fill="#00feb8"/>
<rect x="722" y="138" width="4" height="4" fill="#00feb6"/>
<rect x="726" y="138" width="4" height="4" fill="#00feb3"/>
<rect x="730" y="138" width="4" height="4" fill="#00feaf"/>
<rect x="734" y="138" width="4" height="4" fill="#00feac"/>
<rect x="738" y="138" width="4" height="4" fill="#00fea8"/>
<rect x="742" y="138" width="4" height="4" fill="#00fea3"/>
<rect x="746" y="138" width="4" height="4" fill="#00fe9e"/>
<rect x="750" y="138" width="4" height="4" fill="#00fe98"/>
<rect x="754" y="138" width="4" height="4" fill="#00fe92"/>
<rect x="758" y="138" width="4" height="4" fill="#00fe8b"/>
<rect x="762" y="138" width="4" height="4" fill="#00fe82"/>
<rect x="766" y="138" width="4" height="4" fill="#00fe77"/>
<rect x="714" y="142" width="4" height="4" fill="#00febd"/>
<rect x="718" y="142" width="4" height="4" fill="#00feba"/>
<rect x="722" y="142" width="4" height="4" fill="#00feb8"/>
<rect x="726" y="142" width="4" height="4" fill="#00feb5"/>
<rect x="730" y="142" width="4" height="4" fill="#00feb1"/>
<rect x="734" y="142" width="4" height="4" fill="#00feae"/>
<rect x="738" y="142" width="4" height="4" fill="#00feaa"/>
<rect x="742" y="142" width="4" height="4" fill="#00fea5"/>
<rect x="746" y="142" width="4" height="4" fill="#00fea0"/>
<rect x="750" y="142" width="4" height="4" fill="#00fe9b"/>
<rect x="754" y="142" width="4" height="4" fill="#00fe94"/>
<rect x="758" y="142" width="4" height="4" fill="#00fe8d"/>
<rect x="762" y="142" width="4" height="4" fill="#00fe84"/>
<rect x="766" y="142" width="4" height="4" fill="#00fe7a"/>
<rect x="770" y="142" width="4" height="4" fill="#00fe6d"/>
<rect x="774" y="142" width="4" height="4" fill="#00fe5b"/>
<rect x="714" y="146" width="4" height="4" fill="#00febf"/>
<rect x="718" y="146" width="4" height="4" fill="#00febc"/>
<rect x="722" y="146" width="4" height="4" fill="#00feba"/>
<rect x="726" y="146" width="4" height="4" fill="#00feb7"/>
<rect x="730" y="146" width="4" height="4" fill="#00feb4"/>
<rect x="734" y="146" width="4" height="4" fill="#00feb0"/>
<rect x="738" y="146" width="4" height="4" fill="#00feac"/>
<rect x="742" y="146" width="4" height="4" fill="#00fea8"/>
<rect x="746" y="146" width="4" height="4" fill="#00fea3"/>
<rect x="750" y="146" width="4" height="4" fill="#00fe9d"/>
<rect x="754" y="146" width="4" height="4" fill="#00fe97"/>
<rect x="758" y="146" width="4" height="4" fill="#00fe8f"/>
<rect x="762" y="146" width="4" height="4" fill="#00fe87"/>
<rect x="766" y="146" width="4" height="4" fill="#00fe7c"/>
<rect x="770" y="146" width="4" height="4" fill="#00fe6f"/>
<rect x="774" y="146" width="4" height="4" fill="#00fe5e"/>
<rect x="778" y="146" width="4" height="4" fill="#00fe44"/>
<rect x="714" y="150" width="4" height="4" fill="#00fec1"/>
<rect x="718" y="150" width="4" height="4" fill="#00febe"/>
<rect x="722" y="150" width="4" height="4" fill="#00febc"/>
<rect x="726" y="150" width="4" height="4" fill="#00feb9"/>
<rect x="730" y="150" width="4" height="4" fill="#00feb6"/>
<rect x="734" y="150" width="4" height="4" fill="#00feb2"/>
<rect x="738" y="150" width="4" height="4" fill="#00feae"/>
<rect x="742" y="150" width="4" height="4" fill="#00feaa"/>
<rect x="746" y="150" width="4" height="4" fill="#00fea5"/>
<rect x="750" y="150" width="4" height="4" fill="#00fea0"/>
<rect x="754" y="150" width="4" height="4" fill="#00fe99"/>
<rect x="758" y="150" width="4" height="4" fill="#00fe92"/>
<rect x="762" y="150" width="4" height="4" fill="#00fe89"/>
<rect x="766" y="150" width="4" height="4" fill="#00fe7f"/>
<rect x="770" y="150" width="4" height="4" fill="#00fe72"/>
<rect x="774" y="150" width="4" height="4" fill="#00fe61"/>
<rect x="778" y="150" width="4" height="4" fill="#00fe47"/>
<rect x="782" y="150" width="4" height="4" fill="#00fe03"/>
<rect x="714" y="154" width="4" height="4" fill="#00fec3"/>
<rect x="718" y="154" width="4" height="4" fill="#00fec1"/>
<rect x="722" y="154" width="4" height="4" fill="#00febe"/>
<rect x="726" y="154" width="4" height="4" fill="#00febb"/>
<rect x="730" y="154" width="4" height="4" fill="#00feb8"/>
<rect x="734" y="154" width="4" height="4" fill="#00feb5"/>
<rect x="738" y="154" width="4" height="4" fill="#00feb1"/>
<rect x="742" y="154" width="4" height="4" fill="#00feac"/>
<rect x="746" y="154" width="4" height="4" fill="#00fea8"/>
<rect x="750" y="154" width="4" height="4" fill="#00fea2"/>
<rect x="754" y="154" width="4" height="4" fill="#00fe9c"/>
<rect x="758" y="154" width="4" height="4" fill="#00fe95"/>
<rect x="762" y="154" width="4" height="4" fill="#00fe8c"/>
<rect x="766" y="154" width="4" height="4" fill="#00fe82"/>
<rect x="770" y="154" width="4" height="4" fill="#00fe75"/>
<rect x="774" y="154" width="4" height="4" fill="#00fe64"/>
<rect x="778" y="154" width="4" height="4" fill="#00fe4b"/>
<rect x="782" y="154" width="4" height="4" fill="#00fe0f"/>
<rect x="786" y="154" width="4" height="4" fill="#48fe00"/>
<rect x="714" y="158" width="4" height="4" fill="#00fec5"/>
<rect x="718" y="158" width="4" height="4" fill="#00fec3"/>
<rect x="722" y="158" width="4" height="4" fill="#00fec0"/>
<rect x="726" y="158" width="4" height="4" fill="#00febd"/>
<rect x="730" y="158" width="4" height="4" fill="#00feba"/>
<rect x="734" y="158" width="4" height="4" fill="#00feb7"/>
<rect x="738" y="158" width="4" height="4" fill="#00feb3"/>
<rect x="742" y="158" width="4" height="4" fill="#00feaf"/>
<rect x="746" y="158" width="4" height="4" fill="#00feaa"/>
<rect x="750" y="158" width="4" height="4" fill="#00fea5"/>
<rect x="754" y="158" width="4" height="4" fill="#00fe9f"/>
<rect x="758" y="158" width="4" height="4" fill="#00fe98"/>
<rect x="762" y="158" width="4" height="4" fill="#00fe8f"/>
<rect x="766" y="158" width="4" height="4" fill="#00fe85"/>
<rect x="770" y="158" width="4" height="4" fill="#00fe78"/>
<rect x="774" y="158" width="4" height="4" fill="#00fe67"/>
<rect x="778" y="158" width="4" height="4" fill="#00fe4e"/>
<rect x="782" y="158" width="4" height="4" fill="#00fe17"/>
<rect x="786" y="158" width="4" height="4" fill="#48fe00"/>
<rect x="790" y="158" width="4" height="4" fill="#69fe00"/>
<rect x="714" y="162" width="4" height="4" fill="#00fec7"/>
<rect x="718" y="162" width="4" height="4" fill="#00fec5"/>
<rect x="722" y="162" width="4" height="4" fill="#00fec2"/>
<rect x="726" y="162" width="4" height="4" fill="#00fec0"/>
<rect x="730" y="162" width="4" height="4" fill="#00febd"/>
<rect x="734" y="162" width="4" height="4" fill="#00feb9"/>
<rect x="738" y="162" width="4" height="4" fill="#00feb6"/>
<rect x="742" y="162" width="4" height="4" fill="#00feb2"/>
<rect x="746" y="162" width="4" height="4" fill="#00fead"/>
<rect x="750" y="162" width="4" height="4" fill="#00fea8"/>
<rect x="754" y="162" width="4" height="4" fill="#00fea2"/>
<rect x="758" y="162" width="4" height="4" fill="#00fe9b"/>
<rect x="762" y="162" width="4" height="4" fill="#00fe92"/>
<rect x="766" y="162" width="4" height="4" fill="#00fe88"/>
<rect x="770" y="162" width="4" height="4" fill="#00fe7b"/>
<rect x="774" y="162" width="4" height="4" fill="#00fe6a"/>
<rect x="778" y="162" width="4" height="4" fill="#00fe52"/>
<rect x="782" y="162" width="4" height="4" fill="#00fe1e"/>
<rect x="786" y="162" width="4" height="4" fill="#48fe00"/>
<rect x="790" y="162" width="4" height="4" fill="#6afe00"/>
<rect x="794" y="162" width="4" height="4" fill="#82fe00"/>
<rect x="798" y="162" width="4" height="4" fill="#95fe00"/>
<rect x="714" y="166" width="4" height="4" fill="#00fec9"/>
<rect x="718" y="166" width="4" height="4" fill="#00fec7"/>
<rect x="722" y="166" width="4" height="4" fill="#00fec5"/>
<rect x="726" y="166" width="4" height="4" fill="#00fec2"/>
<rect x="730" y="166" width="4" height="4" fill="#00febf"/>
<rect x="734" y="166" width="4" height="4" fill="#00febc"/>
<rect x="738" y="166" width="4" height="4" fill="#00feb8"/>
<rect x="742" y="166" width="4" height="4" fill="#00feb4"/>
<rect x="746" y="166" width="4" height="4" fill="#00feb0"/>
<rect x="750" y="166" width="4" height="4" fill="#00feab"/>
<rect x="754" y="166" width="4" height="4" fill="#00fea5"/>
<rect x="758" y="166" width="4" height="4" fill="#00fe9e"/>
<rect x="762" y="166" width="4" height="4" fill="#00fe95"/>
<rect x="766" y="166" width="4" height="4" fill="#00fe8b"/>
<rect x="770" y="166" width="4" height="4" fill="#00fe7f"/>
<rect x="774" y="166" width="4" height="4" fill="#00fe6e"/>
<rect x="778" y="166" width="4" height="4" fill="#00fe55"/>
<rect x="782" y="166" width="4" height="4" fill="#00fe24"/>
<rect x="786" y="166" width="4" height="4" fill="#48fe00"/>
<rect x="790" y="166" width="4" height="4" fill="#6bfe00"/>
<rect x="794" y="166" width="4" height="4" fill="#84fe00"/>
<rect x="798" y="166" width="4" height="4" fill="#98fe00"/>
<rect x="802" y="166" width="4" height="4" fill="#aafe00"/>
<rect x="714" y="170" width="4" height="4" fill="#00fecc"/>
<rect x="718" y="170" width="4" height="4" fill="#00feca"/>
<rect x="722" y="170" width="4" height="4" fill="#00fec7"/>
<rect x="726" y="170" width="4" height="4" fill="#00fec5"/>
<rect x="730" y="170" width="4" height="4" fill="#00fec2"/>
<rect x="734" y="170" width="4" height="4" fill="#00febf"/>
<rect x="738" y="170" width="4" height="4" fill="#00febb"/>
<rect x="742" y="170" width="4" height="4" fill="#00feb7"/>
<rect x="746" y="170" width="4" height="4" fill="#00feb3"/>
<rect x="750" y="170" width="4" height="4" fill="#00feae"/>
<rect x="754" y="170" width="4" height="4" fill="#00fea8"/>
<rect x="758" y="170" width="4" height="4" fill="#00fea1"/>
<rect x="762" y="170" width="4" height="4" fill="#00fe99"/>
<rect x="766" y="170" width="4" height="4" fill="#00fe8f"/>
<rect x="770" y="170" width="4" height="4" fill="#00fe82"/>
<rect x="774" y="170" width="4" height="4" fill="#00fe72"/>
<rect x="778" y="170" width="4" height="4" fill="#00fe59"/>
<rect x="782" y="170" width="4" height="4" fill="#00fe2a"/>
<rect x="786" y="170" width="4" height="4" fill="#48fe00"/>
<rect x="790" y="170" width="4" height="4" fill="#6dfe00"/>
<rect x="794" y="170" width="4" height="4" fill="#87fe00"/>
<rect x="798" y="170" width="4" height="4" fill="#9cfe00"/>
<rect x="802" y="170" width="4" height="4" fill="#adfe00"/>
<rect x="806" y="170" width="4" height="4" fill="#bdfe00"/>
<rect x="714" y="174" width="4" height="4" fill="#00fece"/>
<rect x="718" y="174" width="4" height="4" fill="#00fecc"/>
<rect x="722" y="174" width="4" height="4" fill="#00feca"/>
<rect x="726" y="174" width="4" height="4" fill="#00fec7"/>
<rect x="730" y="174" width="4" height="4" fill="#00fec5"/>
<rect x="734" y="174" width="4" height="4" fill="#00fec1"/>
<rect x="738" y="174" width="4" height="4" fill="#00febe"/>
<rect x="742" y="174" width="4" height="4" fill="#00feba"/>
<rect x="746" y="174" width="4" height="4" fill="#00feb6"/>
<rect x="750" y="174" width="4" height="4" fill="#00feb1"/>
<rect x="754" y="174" width="4" height="4" fill="#00feab"/>
<rect x="758" y="174" width="4" height="4" fill="#00fea4"/>
<rect x="762" y="174" width="4" height="4" fill="#00fe9c"/>
<rect x="766" y="174" width="4" height="4" fill="#00fe92"/>
<rect x="770" y="174" width="4" height="4" fill="#00fe86"/>
<rect x="774" y="174" width="4" height="4" fill="#00fe75"/>
<rect x="778" y="174" width="4" height="4" fill="#00fe5d"/>
<rect x="782" y="174" width="4" height="4" fill="#00fe2f"/>
<rect x="786" y="174" width="4" height="4" fill="#48fe00"/>
<rect x="790" y="174" width="4" height="4" fill="#6ffe00"/>
<rect x="794" y="174" width="4" height="4" fill="#8afe00"/>
<rect x="798" y="174" width="4" height="4" fill="#9ffe00"/>
<rect x="802" y="174" width="4" height="4" fill="#b2fe00"/>
<rect x="806" y="174" width="4" height="4" fill="#c2fe00"/>
<rect x="810" y="174" width="4" height="4" fill="#d0fe00"/>
<rect x="714" y="178" width="4" height="4" fill="#00fed1"/>
<rect x="718" y="178" width="4" height="4" fill="#00fecf"/>
<rect x="722" y="178" width="4" height="4" fill="#00fecc"/>
<rect x="726" y="178" width="4" height="4" fill="#00feca"/>
<rect x="730" y="178" width="4" height="4" fill="#00fec7"/>
<rect x="734" y="178" width="4" height="4" fill="#00fec4"/>
<rect x="738" y="178" width="4" height="4" fill="#00fec1"/>
<rect x="742" y="178" width="4" height="4" fill="#00febd"/>
<rect x="746" y="178" width="4" height="4" fill="#00feb9"/>
<rect x="750" y="178" width="4" height="4" fill="#00feb4"/>
<rect x="754" y="178" width="4" height="4" fill="#00feaf"/>
<rect x="758" y="178" width="4" height="4" fill="#00fea8"/>
<rect x="762" y="178" width="4" height="4" fill="#00fea0"/>
<rect x="766" y="178" width="4" height="4" fill="#00fe96"/>
<rect x="770" y="178" width="4" height="4" fill="#00fe8a"/>
<rect x="774" y="178" width="4" height="4" fill="#00fe7a"/>
<rect x="778" y="178" width="4" height="4" fill="#00fe62"/>
<rect x="782" y="178" width="4" height="4" fill="#07fe37"/>
<rect x="786" y="178" width="4" height="4" fill="#50fe24"/>
<rect x="790" y="178" width="4" height="4" fill="#71fe00"/>
<rect x="794" y="178" width="4" height="4" fill="#8dfe00"/>
<rect x="798" y="178" width="4" height="4" fill="#a3fe00"/>
<rect x="802" y="178" width="4" height="4" fill="#b6fe00"/>
<rect x="806" y="178" width="4" height="4" fill="#c7fe00"/>
<rect x="810" y="178" width="4" height="4" fill="#d6fe00"/>
<rect x="814" y="178" width="4" height="4" fill="#e4fe00"/>
<rect x="714" y="182" width="4" height="4" fill="#00fed3"/>
<rect x="718" y="182" width="4" height="4" fill="#00fed1"/>
<rect x="722" y="182" width="4" height="4" fill="#00fecf"/>
<rect x="726" y="182" width="4" height="4" fill="#00fecd"/>
<rect x="730" y="182" width="4" height="4" fill="#00feca"/>
<rect x="734" y="182" width="4" height="4" fill="#00fec7"/>
<rect x="738" y="182" width="4" height="4" fill="#00fec4"/>
<rect x="742" y="182" width="4" height="4" fill="#00fec1"/>
<rect x="746" y="182" width="4" height="4" fill="#00febc"/>
<rect x="750" y="182" width="4" height="4" fill="#00feb8"/>
<rect x="754" y="182" width="4" height="4" fill="#00feb2"/>
<rect x="758" y="182" width="4" height="4" fill="#00feac"/>
<rect x="762" y="182" width="4" height="4" fill="#00fea4"/>
<rect x="766" y="182" width="4" height="4" fill="#00fe9a"/>
<rect x="770" y="182" width="4" height="4" fill="#00fe8e"/>
<rect x="774" y="182" width="4" height="4" fill="#00fe7e"/>
<rect x="778" y="182" width="4" height="4" fill="#00fe66"/>
<rect x="782" y="182" width="4" height="4" fill="#2dfe4a"/>
<rect x="786" y="182" width="4" height="4" fill="#5dfe3e"/>
<rect x="790" y="182" width="4" height="4" fill="#7afe2e"/>
<rect x="794" y="182" width="4" height="4" fill="#91fe0f"/>
<rect x="798" y="182" width="4" height="4" fill="#a8fe00"/>
<rect x="802" y="182" width="4" height="4" fill="#bcfe00"/>
<rect x="806" y="182" width="4" height="4" fill="#cdfe00"/>
<rect x="810" y="182" width="4" height="4" fill="#ddfe00"/>
<rect x="814" y="182" width="4" height="4" fill="#ebfe00"/>
<rect x="818" y="182" width="4" height="4" fill="#f8fe00"/>
<rect x="714" y="186" width="4" height="4" fill="#00fed6"/>
<rect x="718" y="186" width="4" height="4" fill="#00fed4"/>
<rect x="722" y="186" width="4" height="4" fill="#00fed2"/>
<rect x="726" y="186" width="4" height="4" fill="#00fed0"/>
<rect x="730" y="186" width="4" height="4" fill="#00fecd"/>
<rect x="734" y="186" width="4" height="4" fill="#00feca"/>
<rect x="738" y="186" width="4" height="4" fill="#00fec7"/>
<rect x="742" y="186" width="4" height="4" fill="#00fec4"/>
<rect x="746" y="186" width="4" height="4" fill="#00fec0"/>
<rect x="750" y="186" width="4" height="4" fill="#00febb"/>
<rect x="754" y="186" width="4" height="4" fill="#00feb6"/>
<rect x="758" y="186" width="4" height="4" fill="#00feb0"/>
<rect x="762" y="186" width="4" height="4" fill="#00fea8"/>
<rect x="766" y="186" width="4" height="4" fill="#00fe9f"/>
<rect x="770" y="186" width="4" height="4" fill="#00fe93"/>
<rect x="774" y="186" width="4" height="4" fill="#00fe83"/>
<rect x="778" y="186" width="4" height="4" fill="#00fe6b"/>
<rect x="782" y="186" width="4" height="4" fill="#40fe5a"/>
<rect x="786" y="186" width="4" height="4" fill="#68fe51"/>
<rect x="790" y="186" width="4" height="4" fill="#84fe45"/>
<rect x="794" y="186" width="4" height="4" fill="#9bfe36"/>
<rect x="798" y="186" width="4" height="4" fill="#affe1f"/>
<rect x="802" y="186" width="4" height="4" fill="#c2fe00"/>
<rect x="806" y="186" width="4" height="4" fill="#d4fe00"/>
<rect x="810" y="186" width="4" height="4" fill="#e4fe00"/>
<rect x="814" y="186" width="4" height="4" fill="#f3fe00"/>
<rect x="818" y="186" width="4" height="4" fill="#fefc00"/>
<rect x="822" y="186" width="4" height="4" fill="#fef000"/>
<rect x="714" y="190" width="4" height="4" fill="#00fed9"/>
<rect x="718" y="190" width="4" height="4" fill="#00fed7"/>
<rect x="722" y="190" width="4" height="4" fill="#00fed5"/>
<rect x="726" y="190" width="4" height="4" fill="#00fed3"/>
<rect x="730" y="190" width="4" height="4" fill="#00fed0"/>
<rect x="734" y="190" width="4" height="4" fill="#00fece"/>
<rect x="738" y="190" width="4" height="4" fill="#00fecb"/>
<rect x="742" y="190" width="4" height="4" fill="#00fec7"/>
<rect x="746" y="190" width="4" height="4" fill="#00fec4"/>
<rect x="750" y="190" width="4" height="4" fill="#00febf"/>
<rect x="754" y="190" width="4" height="4" fill="#00feba"/>
<rect x="758" y="190" width="4" height="4" fill="#00feb4"/>
<rect x="762" y="190" width="4" height="4" fill="#00feac"/>
<rect x="766" y="190" width="4" height="4" fill="#00fea3"/>
<rect x="770" y="190" width="4" height="4" fill="#00fe97"/>
<rect x="774" y="190" width="4" height="4" fill="#00fe88"/>
<rect x="778" y="190" width="4" height="4" fill="#00fe71"/>
<rect x="782" y="190" width="4" height="4" fill="#50fe68"/>
<rect x="786" y="190" width="4" height="4" fill="#73fe60"/>
<rect x="790" y="190" width="4" height="4" fill="#8efe57"/>
<rect x="794" y="190" width="4" height="4" fill="#a4fe4d"/>
<rect x="798" y="190" width="4" height="4" fill="#b8fe3f"/>
<rect x="802" y="190" width="4" height="4" fill="#cafe2b"/>
<rect x="806" y="190" width="4" height="4" fill="#dbfe00"/>
<rect x="810" y="190" width="4" height="4" fill="#ecfe00"/>
<rect x="814" y="190" width="4" height="4" fill="#fcfe00"/>
<rect x="818" y="190" width="4" height="4" fill="#fef400"/>
<rect x="822" y="190" width="4" height="4" fill="#fee800"/>
<rect x="826" y="190" width="4" height="4" fill="#fede00"/>
<rect x="714" y="194" width="4" height="4" fill="#00fedb"/>
<rect x="718" y="194" width="4" height="4" fill="#00feda"/>
<rect x="722" y="194" width="4" height="4" fill="#00fed8"/>
<rect x="726" y="194" width="4" height="4" fill="#00fed6"/>
<rect x="730" y="194" width="4" height="4" fill="#00fed4"/>
<rect x="734" y="194" width="4" height="4" fill="#00fed1"/>
<rect x="738" y="194" width="4" height="4" fill="#00fece"/>
<rect x="742" y="194" width="4" height="4" fill="#00fecb"/>
<rect x="746" y="194" width="4" height="4" fill="#00fec7"/>
<rect x="750" y="194" width="4" height="4" fill="#00fec3"/>
<rect x="754" y="194" width="4" height="4" fill="#00febe"/>
<rect x="758" y="194" width="4" height="4" fill="#00feb8"/>
<rect x="762" y="194" width="4" height="4" fill="#00feb1"/>
<rect x="766" y="194" width="4" height="4" fill="#00fea8"/>
<rect x="770" y="194" width="4" height="4" fill="#00fe9d"/>
<rect x="774" y="194" width="4" height="4" fill="#00fe8d"/>
<rect x="778" y="194" width="4" height="4" fill="#26fe7b"/>
<rect x="782" y="194" width="4" height="4" fill="#5efe75"/>
<rect x="786" y="194" width="4" height="4" fill="#7efe6f"/>
<rect x="790" y="194" width="4" height="4" fill="#98fe67"/>
<rect x="794" y="194" width="4" height="4" fill="#adfe5f"/>
<rect x="798" y="194" width="4" height="4" fill="#c1fe54"/>
<rect x="802" y="194" width="4" height="4" fill="#d3fe47"/>
<rect x="806" y="194" width="4" height="4" fill="#e5fe36"/>
<rect x="810" y="194" width="4" height="4" fill="#f6fe16"/>
<rect x="814" y="194" width="4" height="4" fill="#fef700"/>
<rect x="818" y="194" width="4" height="4" fill="#feea00"/>
<rect x="822" y="194" width="4" height="4" fill="#fedf00"/>
<rect x="826" y="194" width="4" height="4" fill="#fed500"/>
<rect x="830" y="194" width="4" height="4" fill="#fecc00"/>
<rect x="714" y="198" width="4" height="4" fill="#00fede"/>
<rect x="718" y="198" width="4" height="4" fill="#00fedd"/>
<rect x="722" y="198" width="4" height="4" fill="#00fedb"/>
<rect x="726" y="198" width="4" height="4" fill="#00fed9"/>
<rect x="730" y="198" width="4" height="4" fill="#00fed7"/>
<rect x="734" y="198" width="4" height="4" fill="#00fed5"/>
<rect x="738" y="198" width="4" height="4" fill="#00fed2"/>
<rect x="742" y="198" width="4" height="4" fill="#00fecf"/>
<rect x="746" y="198" width="4" height="4" fill="#00fecc"/>
<rect x="750" y="198" width="4" height="4" fill="#00fec8"/>
<rect x="754" y="198" width="4" height="4" fill="#00fec3"/>
<rect x="758" y="198" width="4" height="4" fill="#00febd"/>
<rect x="762" y="198" width="4" height="4" fill="#00feb6"/>
<rect x="766" y="198" width="4" height="4" fill="#00feae"/>
<rect x="770" y="198" width="4" height="4" fill="#00fea2"/>
<rect x="774" y="198" width="4" height="4" fill="#00fe93"/>
<rect x="778" y="198" width="4" height="4" fill="#3efe87"/>
<rect x="782" y="198" width="4" height="4" fill="#6bfe82"/>
<rect x="786" y="198" width="4" height="4" fill="#89fe7c"/>
<rect x="790" y="198" width="4" height="4" fill="#a2fe76"/>
<rect x="794" y="198" width="4" height="4" fill="#b7fe6f"/>
<rect x="798" y="198" width="4" height="4" fill="#cbfe66"/>
<rect x="802" y="198" width="4" height="4" fill="#defe5c"/>
<rect x="806" y="198" width="4" height="4" fill="#effe50"/>
<rect x="810" y="198" width="4" height="4" fill="#fefd40"/>
<rect x="814" y="198" width="4" height="4" fill="#feed24"/>
<rect x="818" y="198" width="4" height="4" fill="#fee000"/>
<rect x="822" y="198" width="4" height="4" fill="#fed500"/>
<rect x="826" y="198" width="4" height="4" fill="#fecb00"/>
<rect x="830" y="198" width="4" height="4" fill="#fec300"/>
<rect x="834" y="198" width="4" height="4" fill="#febc00"/>
<rect x="714" y="202" width="4" height="4" fill="#00fee1"/>
<rect x="718" y="202" width="4" height="4" fill="#00fee0"/>
<rect x="722" y="202" width="4" height="4" fill="#00fede"/>
<rect x="726" y="202" width="4" height="4" fill="#00fedd"/>
<rect x="730" y="202" width="4" height="4" fill="#00fedb"/>
<rect x="734" y="202" width="4" height="4" fill="#00fed8"/>
<rect x="738" y="202" width="4" height="4" fill="#00fed6"/>
<rect x="742" y="202" width="4" height="4" fill="#00fed3"/>
<rect x="746" y="202" width="4" height="4" fill="#00fed0"/>
<rect x="750" y="202" width="4" height="4" fill="#00fecc"/>
<rect x="754" y="202" width="4" height="4" fill="#00fec8"/>
<rect x="758" y="202" width="4" height="4" fill="#00fec2"/>
<rect x="762" y="202" width="4" height="4" fill="#00febc"/>
<rect x="766" y="202" width="4" height="4" fill="#00feb3"/>
<rect x="770" y="202" width="4" height="4" fill="#00fea8"/>
<rect x="774" y="202" width="4" height="4" fill="#00fe9a"/>
<rect x="778" y="202" width="4" height="4" fill="#50fe93"/>
<rect x="782" y="202" width="4" height="4" fill="#77fe8e"/>
<rect x="786" y="202" width="4" height="4" fill="#94fe89"/>
<rect x="790" y="202" width="4" height="4" fill="#acfe84"/>
<rect x="794" y="202" width="4" height="4" fill="#c1fe7e"/>
<rect x="798" y="202" width="4" height="4" fill="#d5fe77"/>
<rect x="802" y="202" width="4" height="4" fill="#e8fe6f"/>
<rect x="806" y="202" width="4" height="4" fill="#fafe65"/>
<rect x="810" y="202" width="4" height="4" fill="#fef254"/>
<rect x="814" y="202" width="4" height="4" fill="#fee341"/>
<rect x="818" y="202" width="4" height="4" fill="#fed62b"/>
<rect x="822" y="202" width="4" height="4" fill="#feca00"/>
<rect x="826" y="202" width="4" height="4" fill="#fec100"/>
<rect x="830" y="202" width="4" height="4" fill="#feb900"/>
<rect x="834" y="202" width="4" height="4" fill="#feb200"/>
<rect x="838" y="202" width="4" height="4" fill="#feac00"/>
<rect x="714" y="206" width="4" height="4" fill="#00fee4"/>
<rect x="718" y="206" width="4" height="4" fill="#00fee3"/>
<rect x="722" y="206" width="4" height="4" fill="#00fee2"/>
<rect x="726" y="206" width="4" height="4" fill="#00fee0"/>
<rect x="730" y="206" width="4" height="4" fill="#00fede"/>
<rect x="734" y="206" width="4" height="4" fill="#00fedc"/>
<rect x="738" y="206" width="4" height="4" fill="#00feda"/>
<rect x="742" y="206" width="4" height="4" fill="#00fed7"/>
<rect x="746" y="206" width="4" height="4" fill="#00fed4"/>
<rect x="750" y="206" width="4" height="4" fill="#00fed1"/>
<rect x="754" y="206" width="4" height="4" fill="#00fecd"/>
<rect x="758" y="206" width="4" height="4" fill="#00fec8"/>
<rect x="762" y="206" width="4" height="4" fill="#00fec1"/>
<rect x="766" y="206" width="4" height="4" fill="#00feba"/>
<rect x="770" y="206" width="4" height="4" fill="#00feaf"/>
<rect x="774" y="206" width="4" height="4" fill="#1dfea2"/>
<rect x="778" y="206" width="4" height="4" fill="#60fe9f"/>
<rect x="782" y="206" width="4" height="4" fill="#83fe9b"/>
<rect x="786" y="206" width="4" height="4" fill="#9ffe96"/>
<rect x="790" y="206" width="4" height="4" fill="#b7fe92"/>
<rect x="794" y="206" width="4" height="4" fill="#ccfe8c"/>
<rect x="798" y="206" width="4" height="4" fill="#e0fe86"/>
<rect x="802" y="206" width="4" height="4" fill="#f3fe7f"/>
<rect x="806" y="206" width="4" height="4" fill="#fef774"/>
<rect x="810" y="206" width="4" height="4" fill="#fee764"/>
<rect x="814" y="206" width="4" height="4" fill="#fed953"/>
<rect x="818" y="206" width="4" height="4" fill="#fecd43"/>
<rect x="822" y="206" width="4" height="4" fill="#fec130"/>
<rect x="826" y="206" width="4" height="4" fill="#feb713"/>
<rect x="830" y="206" width="4" height="4" fill="#feaf00"/>
<rect x="834" y="206" width="4" height="4" fill="#fea800"/>
<rect x="838" y="206" width="4" height="4" fill="#fea200"/>
<rect x="842" y="206" width="4" height="4" fill="#fe9d00"/>
<rect x="846" y="206" width="4" height="4" fill="#fe9800"/>
<rect x="718" y="210" width="4" height="4" fill="#00fee7"/>
<rect x="722" y="210" width="4" height="4" fill="#00fee5"/>
<rect x="726" y="210" width="4" height="4" fill="#00fee4"/>
<rect x="730" y="210" width="4" height="4" fill="#00fee2"/>
<rect x="734" y="210" width="4" height="4" fill="#00fee0"/>
<rect x="738" y="210" width="4" height="4" fill="#00fede"/>
<rect x="742" y="210" width="4" height="4" fill="#00fedc"/>
<rect x="746" y="210" width="4" height="4" fill="#00fed9"/>
<rect x="750" y="210" width="4" height="4" fill="#00fed6"/>
<rect x="754" y="210" width="4" height="4" fill="#00fed2"/>
<rect x="758" y="210" width="4" height="4" fill="#00fece"/>
<rect x="762" y="210" width="4" height="4" fill="#00fec8"/>
<rect x="766" y="210" width="4" height="4" fill="#00fec0"/>
<rect x="770" y="210" width="4" height="4" fill="#00feb7"/>
<rect x="774" y="210" width="4" height="4" fill="#3cfeae"/>
<rect x="778" y="210" width="4" height="4" fill="#6efeab"/>
<rect x="782" y="210" width="4" height="4" fill="#8ffea7"/>
<rect x="786" y="210" width="4" height="4" fill="#aafea4"/>
<rect x="790" y="210" width="4" height="4" fill="#c2fe9f"/>
<rect x="794" y="210" width="4" height="4" fill="#d8fe9b"/>
<rect x="798" y="210" width="4" height="4" fill="#ecfe96"/>
<rect x="802" y="210" width="4" height="4" fill="#fefd8f"/>
<rect x="806" y="210" width="4" height="4" fill="#feec7f"/>
<rect x="810" y="210" width="4" height="4" fill="#fedc6f"/>
<rect x="814" y="210" width="4" height="4" fill="#fecf61"/>
<rect x="818" y="210" width="4" height="4" fill="#fec353"/>
<rect x="822" y="210" width="4" height="4" fill="#feb844"/>
<rect x="826" y="210" width="4" height="4" fill="#feae33"/>
<rect x="830" y="210" width="4" height="4" fill="#fea51d"/>
<rect x="834" y="210" width="4" height="4" fill="#fe9d00"/>
<rect x="838" y="210" width="4" height="4" fill="#fe9700"/>
<rect x="842" y="210" width="4" height="4" fill="#fe9200"/>
<rect x="846" y="210" width="4" height="4" fill="#fe8e00"/>
<rect x="850" y="210" width="4" height="4" fill="#fe8a00"/>
<rect x="718" y="214" width="4" height="4" fill="#00feea"/>
<rect x="722" y="214" width="4" height="4" fill="#00fee9"/>
<rect x="726" y="214" width="4" height="4" fill="#00fee8"/>
<rect x="730" y="214" width="4" height="4" fill="#00fee6"/>
<rect x="734" y="214" width="4" height="4" fill="#00fee5"/>
<rect x="738" y="214" width="4" height="4" fill="#00fee3"/>
<rect x="742" y="214" width="4" height="4" fill="#00fee1"/>
<rect x="746" y="214" width="4" height="4" fill="#00fede"/>
<rect x="750" y="214" width="4" height="4" fill="#00fedc"/>
<rect x="754" y="214" width="4" height="4" fill="#00fed8"/>
<rect x="758" y="214" width="4" height="4" fill="#00fed4"/>
<rect x="762" y="214" width="4" height="4" fill="#00fecf"/>
<rect x="766" y="214" width="4" height="4" fill="#00fec8"/>
<rect x="770" y="214" width="4" height="4" fill="#00febf"/>
<rect x="774" y="214" width="4" height="4" fill="#51feba"/>
<rect x="778" y="214" width="4" height="4" fill="#7cfeb7"/>
<rect x="782" y="214" width="4" height="4" fill="#9cfeb4"/>
<rect x="786" y="214" width="4" height="4" fill="#b6feb1"/>
<rect x="790" y="214" width="4" height="4" fill="#cefead"/>
<rect x="794" y="214" width="4" height="4" fill="#e4feaa"/>
<rect x="798" y="214" width="4" height="4" fill="#f9fea5"/>
<rect x="802" y="214" width="4" height="4" fill="#fef198"/>
<rect x="806" y="214" width="4" height="4" fill="#fee088"/>
<rect x="810" y="214" width="4" height="4" fill="#fed279"/>
<rect x="814" y="214" width="4" height="4" fill="#fec56c"/>
<rect x="818" y="214" width="4" height="4" fill="#feb95f"/>
<rect x="822" y="214" width="4" height="4" fill="#feaf52"/>
<rect x="826" y="214" width="4" height="4" fill="#fea545"/>
<rect x="830" y="214" width="4" height="4" fill="#fe9c36"/>
<rect x="834" y="214" width="4" height="4" fill="#fe9324"/>
<rect x="838" y="214" width="4" height="4" fill="#fe8b02"/>
<rect x="842" y="214" width="4" height="4" fill="#fe8700"/>
<rect x="846" y="214" width="4" height="4" fill="#fe8200"/>
<rect x="850" y="214" width="4" height="4" fill="#fe7f00"/>
<rect x="854" y="214" width="4" height="4" fill="#fe7b00"/>
<rect x="718" y="218" width="4" height="4" fill="#00feee"/>
<rect x="722" y="218" width="4" height="4" fill="#00feed"/>
<rect x="726" y="218" width="4" height="4" fill="#00feec"/>
<rect x="730" y="218" width="4" height="4" fill="#00feeb"/>
<rect x="734" y="218" width="4" height="4" fill="#00fee9"/>
<rect x="738" y="218" width="4" height="4" fill="#00fee8"/>
<rect x="742" y="218" width="4" height="4" fill="#00fee6"/>
<rect x="746" y="218" width="4" height="4" fill="#00fee4"/>
<rect x="750" y="218" width="4" height="4" fill="#00fee2"/>
<rect x="754" y="218" width="4" height="4" fill="#00fedf"/>
<rect x="758" y="218" width="4" height="4" fill="#00fedb"/>
<rect x="762" y="218" width="4" height="4" fill="#00fed6"/>
<rect x="766" y="218" width="4" height="4" fill="#00fed0"/>
<rect x="770" y="218" width="4" height="4" fill="#06fec8"/>
<rect x="774" y="218" width="4" height="4" fill="#62fec6"/>
<rect x="778" y="218" width="4" height="4" fill="#8afec4"/>
<rect x="782" y="218" width="4" height="4" fill="#a8fec2"/>
<rect x="786" y="218" width="4" height="4" fill="#c2febf"/>
<rect x="790" y="218" width="4" height="4" fill="#dafebc"/>
<rect x="794" y="218" width="4" height="4" fill="#f1feb9"/>
<rect x="798" y="218" width="4" height="4" fill="#fef7b0"/>
<rect x="802" y="218" width="4" height="4" fill="#fee59f"/>
<rect x="806" y="218" width="4" height="4" fill="#fed590"/>
<rect x="810" y="218" width="4" height="4" fill="#fec782"/>
<rect x="814" y="218" width="4" height="4" fill="#febb75"/>
<rect x="818" y="218" width="4" height="4" fill="#feaf69"/>
<rect x="822" y="218" width="4" height="4" fill="#fea55d"/>
<rect x="826" y="218" width="4" height="4" fill="#fe9c51"/>
<rect x="830" y="218" width="4" height="4" fill="#fe9345"/>
<rect x="834" y="218" width="4" height="4" fill="#fe8a38"/>
<rect x="838" y="218" width="4" height="4" fill="#fe8228"/>
<rect x="842" y="218" width="4" height="4" fill="#fe7b12"/>
<rect x="846" y="218" width="4" height="4" fill="#fe7600"/>
<rect x="850" y="218" width="4" height="4" fill="#fe7200"/>
<rect x="854" y="218" width="4" height="4" fill="#fe6f00"/>
<rect x="858" y="218" width="4" height="4" fill="#fe6c00"/>
<rect x="718" y="222" width="4" height="4" fill="#00fef2"/>
<rect x="722" y="222" width="4" height="4" fill="#00fef1"/>
<rect x="726" y="222" width="4" height="4" fill="#00fef0"/>
<rect x="730" y="222" width="4" height="4" fill="#00feef"/>
<rect x="734" y="222" width="4" height="4" fill="#00feee"/>
<rect x="738" y="222" width="4" height="4" fill="#00feed"/>
<rect x="742" y="222" width="4" height="4" fill="#00feec"/>
<rect x="746" y="222" width="4" height="4" fill="#00feea"/>
<rect x="750" y="222" width="4" height="4" fill="#00fee8"/>
<rect x="754" y="222" width="4" height="4" fill="#00fee6"/>
<rect x="758" y="222" width="4" height="4" fill="#00fee3"/>
<rect x="762" y="222" width="4" height="4" fill="#00fedf"/>
<rect x="766" y="222" width="4" height="4" fill="#00feda"/>
<rect x="770" y="222" width="4" height="4" fill="#38fed5"/>
<rect x="774" y="222" width="4" height="4" fill="#73fed3"/>
<rect x="778" y="222" width="4" height="4" fill="#97fed1"/>
<rect x="782" y="222" width="4" height="4" fill="#b5fed0"/>
<rect x="786" y="222" width="4" height="4" fill="#d0fecd"/>
<rect x="790" y="222" width="4" height="4" fill="#e8fecb"/>
<rect x="794" y="222" width="4" height="4" fill="#fefec8"/>
<rect x="798" y="222" width="4" height="4" fill="#feeab5"/>
<rect x="802" y="222" width="4" height="4" fill="#fed8a5"/>
<rect x="806" y="222" width="4" height="4" fill="#fec996"/>
<rect x="810" y="222" width="4" height="4" fill="#febc89"/>
<rect x="814" y="222" width="4" height="4" fill="#feb07d"/>
<rect x="818" y="222" width="4" height="4" fill="#fea572"/>
<rect x="822" y="222" width="4" height="4" fill="#fe9b67"/>
<rect x="826" y="222" width="4" height="4" fill="#fe925c"/>
<rect x="830" y="222" width="4" height="4" fill="#fe8951"/>
<rect x="834" y="222" width="4" height="4" fill="#fe8146"/>
<rect x="838" y="222" width="4" height="4" fill="#fe793a"/>
<rect x="842" y="222" width="4" height="4" fill="#fe712c"/>
<rect x="846" y="222" width="4" height="4" fill="#fe6a1a"/>
<rect x="850" y="222" width="4" height="4" fill="#fe6300"/>
<rect x="854" y="222" width="4" height="4" fill="#fe6000"/>
<rect x="858" y="222" width="4" height="4" fill="#fe5e00"/>
<rect x="862" y="222" width="4" height="4" fill="#fe5b00"/>
<rect x="718" y="226" width="4" height="4" fill="#00fef6"/>
<rect x="722" y="226" width="4" height="4" fill="#00fef5"/>
<rect x="726" y="226" width="4" height="4" fill="#00fef5"/>
<rect x="730" y="226" width="4" height="4" fill="#00fef4"/>
<rect x="734" y="226" width="4" height="4" fill="#00fef3"/>
<rect x="738" y="226" width="4" height="4" fill="#00fef2"/>
<rect x="742" y="226" width="4" height="4" fill="#00fef2"/>
<rect x="746" y="226" width="4" height="4" fill="#00fef0"/>
<rect x="750" y="226" width="4" height="4" fill="#00feef"/>
<rect x="754" y="226" width="4" height="4" fill="#00feed"/>
<rect x="758" y="226" width="4" height="4" fill="#00feeb"/>
<rect x="762" y="226" width="4" height="4" fill="#00fee8"/>
<rect x="766" y="226" width="4" height="4" fill="#00fee5"/>
<rect x="770" y="226" width="4" height="4" fill="#51fee2"/>
<rect x="774" y="226" width="4" height="4" fill="#82fee1"/>
<rect x="778" y="226" width="4" height="4" fill="#a6fee0"/>
<rect x="782" y="226" width="4" height="4" fill="#c3fede"/>
<rect x="786" y="226" width="4" height="4" fill="#defedd"/>
<rect x="790" y="226" width="4" height="4" fill="#f6fedb"/>
<rect x="794" y="226" width="4" height="4" fill="#fef0cd"/>
<rect x="798" y="226" width="4" height="4" fill="#fedcba"/>
<rect x="802" y="226" width="4" height="4" fill="#feccab"/>
<rect x="806" y="226" width="4" height="4" fill="#febe9d"/>
<rect x="810" y="226" width="4" height="4" fill="#feb190"/>
<rect x="814" y="226" width="4" height="4" fill="#fea584"/>
<rect x="818" y="226" width="4" height="4" fill="#fe9b79"/>
<rect x="822" y="226" width="4" height="4" fill="#fe916f"/>
<rect x="826" y="226" width="4" height="4" fill="#fe8865"/>
<rect x="830" y="226" width="4" height="4" fill="#fe7f5b"/>
<rect x="834" y="226" width="4" height="4" fill="#fe7751"/>
<rect x="838" y="226" width="4" height="4" fill="#fe6f46"/>
<rect x="842" y="226" width="4" height="4" fill="#fe673b"/>
<rect x="846" y="226" width="4" height="4" fill="#fe5f2f"/>
<rect x="850" y="226" width="4" height="4" fill="#fe5720"/>
<rect x="854" y="226" width="4" height="4" fill="#fe4f04"/>
<rect x="858" y="226" width="4" height="4" fill="#fe4c00"/>
<rect x="862" y="226" width="4" height="4" fill="#fe4a00"/>
<rect x="866" y="226" width="4" height="4" fill="#fe4800"/>
<rect x="718" y="230" width="4" height="4" fill="#00fefa"/>
<rect x="722" y="230" width="4" height="4" fill="#00fefa"/>
<rect x="726" y="230" width="4" height="4" fill="#00fefa"/>
<rect x="730" y="230" width="4" height="4" fill="#00fef9"/>
<rect x="734" y="230" width="4" height="4" fill="#00fef9"/>
<rect x="738" y="230" width="4" height="4" fill="#00fef8"/>
<rect x="742" y="230" width="4" height="4" fill="#00fef8"/>
<rect x="746" y="230" width="4" height="4" fill="#00fef7"/>
<rect x="750" y="230" width="4" height="4" fill="#00fef6"/>
<rect x="754" y="230" width="4" height="4" fill="#00fef6"/>
<rect x="758" y="230" width="4" height="4" fill="#00fef4"/>
<rect x="762" y="230" width="4" height="4" fill="#00fef3"/>
<rect x="766" y="230" width="4" height="4" fill="#00fef1"/>
<rect x="770" y="230" width="4" height="4" fill="#66fef0"/>
<rect x="774" y="230" width="4" height="4" fill="#92fef0"/>
<rect x="778" y="230" width="4" height="4" fill="#b4feef"/>
<rect x="782" y="230" width="4" height="4" fill="#d2feee"/>
<rect x="786" y="230" width="4" height="4" fill="#edfeee"/>
<rect x="790" y="230" width="4" height="4" fill="#fef7e5"/>
<rect x="794" y="230" width="4" height="4" fill="#fee1d1"/>
<rect x="798" y="230" width="4" height="4" fill="#fecfbf"/>
<rect x="802" y="230" width="4" height="4" fill="#fec0b0"/>
<rect x="806" y="230" width="4" height="4" fill="#feb2a2"/>
<rect x="810" y="230" width="4" height="4" fill="#fea696"/>
<rect x="814" y="230" width="4" height="4" fill="#fe9a8a"/>
<rect x="818" y="230" width="4" height="4" fill="#fe9080"/>
<rect x="822" y="230" width="4" height="4" fill="#fe8676"/>
<rect x="826" y="230" width="4" height="4" fill="#fe7d6c"/>
<rect x="830" y="230" width="4" height="4" fill="#fe7463"/>
<rect x="834" y="230" width="4" height="4" fill="#fe6c5a"/>
<rect x="838" y="230" width="4" height="4" fill="#fe6350"/>
<rect x="842" y="230" width="4" height="4" fill="#fe5b47"/>
<rect x="846" y="230" width="4" height="4" fill="#fe533d"/>
<rect x="850" y="230" width="4" height="4" fill="#fe4a31"/>
<rect x="854" y="230" width="4" height="4" fill="#fe4124"/>
<rect x="858" y="230" width="4" height="4" fill="#fe3810"/>
<rect x="862" y="230" width="4" height="4" fill="#fe3200"/>
<rect x="866" y="230" width="4" height="4" fill="#fe3100"/>
<rect x="870" y="230" width="4" height="4" fill="#fe3000"/>
<rect x="722" y="234" width="4" height="4" fill="#00fefe"/>
<rect x="726" y="234" width="4" height="4" fill="#00fefe"/>
<rect x="730" y="234" width="4" height="4" fill="#00fefe"/>
<rect x="734" y="234" width="4" height="4" fill="#00fefe"/>
<rect x="738" y="234" width="4" height="4" fill="#00fefe"/>
<rect x="742" y="234" width="4" height="4" fill="#00fefe"/>
<rect x="746" y="234" width="4" height="4" fill="#00fefe"/>
<rect x="750" y="234" width="4" height="4" fill="#00fefe"/>
<rect x="754" y="234" width="4" height="4" fill="#00fefe"/>
<rect x="758" y="234" width="4" height="4" fill="#00fefe"/>
<rect x="762" y="234" width="4" height="4" fill="#00fefe"/>
<rect x="766" y="234" width="4" height="4" fill="#31fefe"/>
<rect x="770" y="234" width="4" height="4" fill="#78fefe"/>
<rect x="774" y="234" width="4" height="4" fill="#a2fefe"/>
<rect x="778" y="234" width="4" height="4" fill="#c3fefe"/>
<rect x="782" y="234" width="4" height="4" fill="#e1fdfe"/>
<rect x="786" y="234" width="4" height="4" fill="#fcfdfe"/>
<rect x="790" y="234" width="4" height="4" fill="#fee7e8"/>
<rect x="794" y="234" width="4" height="4" fill="#fed3d4"/>
<rect x="798" y="234" width="4" height="4" fill="#fec2c3"/>
<rect x="802" y="234" width="4" height="4" fill="#feb3b4"/>
<rect x="806" y="234" width="4" height="4" fill="#fea6a7"/>
<rect x="810" y="234" width="4" height="4" fill="#fe9a9b"/>
<rect x="814" y="234" width="4" height="4" fill="#fe8f90"/>
<rect x="818" y="234" width="4" height="4" fill="#fe8486"/>
<rect x="822" y="234" width="4" height="4" fill="#fe7b7c"/>
<rect x="826" y="234" width="4" height="4" fill="#fe7173"/>
<rect x="830" y="234" width="4" height="4" fill="#fe686a"/>
<rect x="834" y="234" width="4" height="4" fill="#fe6061"/>
<rect x="838" y="234" width="4" height="4" fill="#fe5759"/>
<rect x="842" y="234" width="4" height="4" fill="#fe4e50"/>
<rect x="846" y="234" width="4" height="4" fill="#fe4547"/>
<rect x="850" y="234" width="4" height="4" fill="#fe3b3e"/>
<rect x="854" y="234" width="4" height="4" fill="#fe3033"/>
<rect x="858" y="234" width="4" height="4" fill="#fe2327"/>
<rect x="862" y="234" width="4" height="4" fill="#fe0f18"/>
<rect x="866" y="234" width="4" height="4" fill="#fe000c"/>
<rect x="870" y="234" width="4" height="4" fill="#fe000c"/>
<rect x="874" y="234" width="4" height="4" fill="#fe000c"/>
<rect x="722" y="238" width="4" height="4" fill="#00f9fe"/>
<rect x="726" y="238" width="4" height="4" fill="#00f9fe"/>
<rect x="730" y="238" width="4" height="4" fill="#00f9fe"/>
<rect x="734" y="238" width="4" height="4" fill="#00f8fe"/>
<rect x="738" y="238" width="4" height="4" fill="#00f8fe"/>
<rect x="742" y="238" width="4" height="4" fill="#00f7fe"/>
<rect x="746" y="238" width="4" height="4" fill="#00f6fe"/>
<rect x="750" y="238" width="4" height="4" fill="#00f5fe"/>
<rect x="754" y="238" width="4" height="4" fill="#00f4fe"/>
<rect x="758" y="238" width="4" height="4" fill="#00f3fe"/>
<rect x="762" y="238" width="4" height="4" fill="#00f1fe"/>
<rect x="766" y="238" width="4" height="4" fill="#4ceffe"/>
<rect x="770" y="238" width="4" height="4" fill="#82eefe"/>
<rect x="774" y="238" width="4" height="4" fill="#a7eefe"/>
<rect x="778" y="238" width="4" height="4" fill="#c6edfe"/>
<rect x="782" y="238" width="4" height="4" fill="#e1ecfe"/>
<rect x="786" y="238" width="4" height="4" fill="#fbebfe"/>
<rect x="790" y="238" width="4" height="4" fill="#fed7ea"/>
<rect x="794" y="238" width="4" height="4" fill="#fec4d7"/>
<rect x="798" y="238" width="4" height="4" fill="#feb4c7"/>
<rect x="802" y="238" width="4" height="4" fill="#fea6b8"/>
<rect x="806" y="238" width="4" height="4" fill="#fe99ab"/>
<rect x="810" y="238" width="4" height="4" fill="#fe8da0"/>
<rect x="814" y="238" width="4" height="4" fill="#fe8295"/>
<rect x="818" y="238" width="4" height="4" fill="#fe788b"/>
<rect x="822" y="238" width="4" height="4" fill="#fe6e82"/>
<rect x="826" y="238" width="4" height="4" fill="#fe6579"/>
<rect x="830" y="238" width="4" height="4" fill="#fe5b71"/>
<rect x="834" y="238" width="4" height="4" fill="#fe5268"/>
<rect x="838" y="238" width="4" height="4" fill="#fe4860"/>
<rect x="842" y="238" width="4" height="4" fill="#fe3e58"/>
<rect x="846" y="238" width="4" height="4" fill="#fe3250"/>
<rect x="850" y="238" width="4" height="4" fill="#fe2547"/>
<rect x="854" y="238" width="4" height="4" fill="#fe113f"/>
<rect x="858" y="238" width="4" height="4" fill="#fe0039"/>
<rect x="862" y="238" width="4" height="4" fill="#fe0038"/>
<rect x="866" y="238" width="4" height="4" fill="#fe0036"/>
<rect x="870" y="238" width="4" height="4" fill="#fe0035"/>
<rect x="874" y="238" width="4" height="4" fill="#fe0034"/>
<rect x="878" y="238" width="4" height="4" fill="#fe0033"/>
<rect x="722" y="242" width="4" height="4" fill="#00f4fe"/>
<rect x="726" y="242" width="4" height="4" fill="#00f4fe"/>
<rect x="730" y="242" width="4" height="4" fill="#00f3fe"/>
<rect x="734" y="242" width="4" height="4" fill="#00f2fe"/>
<rect x="738" y="242" width="4" height="4" fill="#00f1fe"/>
<rect x="742" y="242" width="4" height="4" fill="#00f0fe"/>
<rect x="746" y="242" width="4" height="4" fill="#00eefe"/>
<rect x="750" y="242" width="4" height="4" fill="#00ecfe"/>
<rect x="754" y="242" width="4" height="4" fill="#00eafe"/>
<rect x="758" y="242" width="4" height="4" fill="#00e7fe"/>
<rect x="762" y="242" width="4" height="4" fill="#00e2fe"/>
<rect x="766" y="242" width="4" height="4" fill="#5de1fe"/>
<rect x="770" y="242" width="4" height="4" fill="#8adffe"/>
<rect x="774" y="242" width="4" height="4" fill="#abdefe"/>
<rect x="778" y="242" width="4" height="4" fill="#c8dcfe"/>
<rect x="782" y="242" width="4" height="4" fill="#e2dbfe"/>
<rect x="786" y="242" width="4" height="4" fill="#fad9fe"/>
<rect x="790" y="242" width="4" height="4" fill="#fec7ed"/>
<rect x="794" y="242" width="4" height="4" fill="#feb6da"/>
<rect x="798" y="242" width="4" height="4" fill="#fea6ca"/>
<rect x="802" y="242" width="4" height="4" fill="#fe98bc"/>
<rect x="806" y="242" width="4" height="4" fill="#fe8cb0"/>
<rect x="810" y="242" width="4" height="4" fill="#fe80a4"/>
<rect x="814" y="242" width="4" height="4" fill="#fe759a"/>
<rect x="818" y="242" width="4" height="4" fill="#fe6b90"/>
<rect x="822" y="242" width="4" height="4" fill="#fe6087"/>
<rect x="826" y="242" width="4" height="4" fill="#fe567f"/>
<rect x="830" y="242" width="4" height="4" fill="#fe4c76"/>
<rect x="834" y="242" width="4" height="4" fill="#fe416e"/>
<rect x="838" y="242" width="4" height="4" fill="#fe3567"/>
<rect x="842" y="242" width="4" height="4" fill="#fe275f"/>
<rect x="846" y="242" width="4" height="4" fill="#fe1457"/>
<rect x="850" y="242" width="4" height="4" fill="#fe0052"/>
<rect x="854" y="242" width="4" height="4" fill="#fe0050"/>
<rect x="858" y="242" width="4" height="4" fill="#fe004e"/>
<rect x="862" y="242" width="4" height="4" fill="#fe004c"/>
<rect x="866" y="242" width="4" height="4" fill="#fe004a"/>
<rect x="870" y="242" width="4" height="4" fill="#fe0049"/>
<rect x="874" y="242" width="4" height="4" fill="#fe0047"/>
<rect x="878" y="242" width="4" height="4" fill="#fe0046"/>
<rect x="882" y="242" width="4" height="4" fill="#fe0044"/>
<rect x="722" y="246" width="4" height="4" fill="#00effe"/>
<rect x="726" y="246" width="4" height="4" fill="#00eefe"/>
<rect x="730" y="246" width="4" height="4" fill="#00edfe"/>
<rect x="734" y="246" width="4" height="4" fill="#00ecfe"/>
<rect x="738" y="246" width="4" height="4" fill="#00eafe"/>
<rect x="742" y="246" width="4" height="4" fill="#00e8fe"/>
<rect x="746" y="246" width="4" height="4" fill="#00e6fe"/>
<rect x="750" y="246" width="4" height="4" fill="#00e3fe"/>
<rect x="754" y="246" width="4" height="4" fill="#00dffe"/>
<rect x="758" y="246" width="4" height="4" fill="#00dafe"/>
<rect x="762" y="246" width="4" height="4" fill="#1ed4fe"/>
<rect x="766" y="246" width="4" height="4" fill="#69d2fe"/>
<rect x="770" y="246" width="4" height="4" fill="#90d0fe"/>
<rect x="774" y="246" width="4" height="4" fill="#afcefe"/>
<rect x="778" y="246" width="4" height="4" fill="#caccfe"/>
<rect x="782" y="246" width="4" height="4" fill="#e2cafe"/>
<rect x="786" y="246" width="4" height="4" fill="#f9c7fe"/>
<rect x="790" y="246" width="4" height="4" fill="#feb7ee"/>
<rect x="794" y="246" width="4" height="4" fill="#fea7dc"/>
<rect x="798" y="246" width="4" height="4" fill="#fe98cd"/>
<rect x="802" y="246" width="4" height="4" fill="#fe8abf"/>
<rect x="806" y="246" width="4" height="4" fill="#fe7eb3"/>
<rect x="810" y="246" width="4" height="4" fill="#fe72a8"/>
<rect x="814" y="246" width="4" height="4" fill="#fe679e"/>
<rect x="818" y="246" width="4" height="4" fill="#fe5c95"/>
<rect x="822" y="246" width="4" height="4" fill="#fe508c"/>
<rect x="826" y="246" width="4" height="4" fill="#fe4584"/>
<rect x="830" y="246" width="4" height="4" fill="#fe397c"/>
<rect x="834" y="246" width="4" height="4" fill="#fe2a74"/>
<rect x="838" y="246" width="4" height="4" fill="#fe166c"/>
<rect x="842" y="246" width="4" height="4" fill="#fe0067"/>
<rect x="846" y="246" width="4" height="4" fill="#fe0064"/>
<rect x="850" y="246" width="4" height="4" fill="#fe0061"/>
<rect x="854" y="246" width="4" height="4" fill="#fe005f"/>
<rect x="858" y="246" width="4" height="4" fill="#fe005c"/>
<rect x="862" y="246" width="4" height="4" fill="#fe005a"/>
<rect x="866" y="246" width="4" height="4" fill="#fe0058"/>
<rect x="870" y="246" width="4" height="4" fill="#fe0057"/>
<rect x="874" y="246" width="4" height="4" fill="#fe0055"/>
<rect x="878" y="246" width="4" height="4" fill="#fe0053"/>
<rect x="882" y="246" width="4" height="4" fill="#fe0052"/>
<rect x="886" y="246" width="4" height="4" fill="#fe0050"/>
<rect x="726" y="250" width="4" height="4" fill="#00e9fe"/>
<rect x="730" y="250" width="4" height="4" fill="#00e7fe"/>
<rect x="734" y="250" width="4" height="4" fill="#00e5fe"/>
<rect x="738" y="250" width="4" height="4" fill="#00e3fe"/>
<rect x="742" y="250" width="4" height="4" fill="#00e0fe"/>
<rect x="746" y="250" width="4" height="4" fill="#00ddfe"/>
<rect x="750" y="250" width="4" height="4" fill="#00d9fe"/>
<rect x="754" y="250" width="4" height="4" fill="#00d3fe"/>
<rect x="758" y="250" width="4" height="4" fill="#00ccfe"/>
<rect x="762" y="250" width="4" height="4" fill="#3ec6fe"/>
<rect x="766" y="250" width="4" height="4" fill="#73c4fe"/>
<rect x="770" y="250" width="4" height="4" fill="#96c2fe"/>
<rect x="774" y="250" width="4" height="4" fill="#b2bffe"/>
<rect x="778" y="250" width="4" height="4" fill="#ccbcfe"/>
<rect x="782" y="250" width="4" height="4" fill="#e3b9fe"/>
<rect x="786" y="250" width="4" height="4" fill="#f9b5fe"/>
<rect x="790" y="250" width="4" height="4" fill="#fea7f0"/>
<rect x="794" y="250" width="4" height="4" fill="#fe97df"/>
<rect x="798" y="250" width="4" height="4" fill="#fe88d0"/>
<rect x="802" y="250" width="4" height="4" fill="#fe7bc3"/>
<rect x="806" y="250" width="4" height="4" fill="#fe6eb7"/>
<rect x="810" y="250" width="4" height="4" fill="#fe62ac"/>
<rect x="814" y="250" width="4" height="4" fill="#fe56a2"/>
<rect x="818" y="250" width="4" height="4" fill="#fe4999"/>
<rect x="822" y="250" width="4" height="4" fill="#fe3c90"/>
<rect x="826" y="250" width="4" height="4" fill="#fe2d88"/>
<rect x="830" y="250" width="4" height="4" fill="#fe1980"/>
<rect x="834" y="250" width="4" height="4" fill="#fe007a"/>
<rect x="838" y="250" width="4" height="4" fill="#fe0076"/>
<rect x="842" y="250" width="4" height="4" fill="#fe0073"/>
<rect x="846" y="250" width="4" height="4" fill="#fe0070"/>
<rect x="850" y="250" width="4" height="4" fill="#fe006d"/>
<rect x="854" y="250" width="4" height="4" fill="#fe006b"/>
<rect x="858" y="250" width="4" height="4" fill="#fe0068"/>
<rect x="862" y="250" width="4" height="4" fill="#fe0066"/>
<rect x="866" y="250" width="4" height="4" fill="#fe0064"/>
<rect x="870" y="250" width="4" height="4" fill="#fe0062"/>
<rect x="874" y="250" width="4" height="4" fill="#fe0060"/>
<rect x="878" y="250" width="4" height="4" fill="#fe005e"/>
<rect x="882" y="250" width="4" height="4" fill="#fe005c"/>
<rect x="886" y="250" width="4" height="4" fill="#fe005b"/>
<rect x="726" y="254" width="4" height="4" fill="#00e3fe"/>
<rect x="730" y="254" width="4" height="4" fill="#00e1fe"/>
<rect x="734" y="254" width="4" height="4" fill="#00defe"/>
<rect x="738" y="254" width="4" height="4" fill="#00dbfe"/>
<rect x="742" y="254" width="4" height="4" fill="#00d8fe"/>
<rect x="746" y="254" width="4" height="4" fill="#00d3fe"/>
<rect x="750" y="254" width="4" height="4" fill="#00cefe"/>
<rect x="754" y="254" width="4" height="4" fill="#00c7fe"/>
<rect x="758" y="254" width="4" height="4" fill="#00befe"/>
<rect x="762" y="254" width="4" height="4" fill="#50b9fe"/>
<rect x="766" y="254" width="4" height="4" fill="#7cb6fe"/>
<rect x="770" y="254" width="4" height="4" fill="#9bb3fe"/>
<rect x="774" y="254" width="4" height="4" fill="#b5affe"/>
<rect x="778" y="254" width="4" height="4" fill="#cdabfe"/>
<rect x="782" y="254" width="4" height="4" fill="#e3a7fe"/>
<rect x="786" y="254" width="4" height="4" fill="#f8a3fe"/>
<rect x="790" y="254" width="4" height="4" fill="#fe95f2"/>
<rect x="794" y="254" width="4" height="4" fill="#fe86e1"/>
<rect x="798" y="254" width="4" height="4" fill="#fe77d2"/>
<rect x="802" y="254" width="4" height="4" fill="#fe69c6"/>
<rect x="806" y="254" width="4" height="4" fill="#fe5cba"/>
<rect x="810" y="254" width="4" height="4" fill="#fe4fb0"/>
<rect x="814" y="254" width="4" height="4" fill="#fe41a6"/>
<rect x="818" y="254" width="4" height="4" fill="#fe319d"/>
<rect x="822" y="254" width="4" height="4" fill="#fe1c94"/>
<rect x="826" y="254" width="4" height="4" fill="#fe008d"/>
<rect x="830" y="254" width="4" height="4" fill="#fe0089"/>
<rect x="834" y="254" width="4" height="4" fill="#fe0085"/>
<rect x="838" y="254" width="4" height="4" fill="#fe0081"/>
<rect x="842" y="254" width="4" height="4" fill="#fe007d"/>
<rect x="846" y="254" width="4" height="4" fill="#fe007a"/>
<rect x="850" y="254" width="4" height="4" fill="#fe0077"/>
<rect x="854" y="254" width="4" height="4" fill="#fe0074"/>
<rect x="858" y="254" width="4" height="4" fill="#fe0072"/>
<rect x="862" y="254" width="4" height="4" fill="#fe006f"/>
<rect x="866" y="254" width="4" height="4" fill="#fe006d"/>
<rect x="870" y="254" width="4" height="4" fill="#fe006b"/>
<rect x="874" y="254" width="4" height="4" fill="#fe0069"/>
<rect x="878" y="254" width="4" height="4" fill="#fe0067"/>
<rect x="726" y="258" width="4" height="4" fill="#00ddfe"/>
<rect x="730" y="258" width="4" height="4" fill="#00dafe"/>
<rect x="734" y="258" width="4" height="4" fill="#00d7fe"/>
<rect x="738" y="258" width="4" height="4" fill="#00d3fe"/>
<rect x="742" y="258" width="4" height="4" fill="#00cffe"/>
<rect x="746" y="258" width="4" height="4" fill="#00cafe"/>
<rect x="750" y="258" width="4" height="4" fill="#00c3fe"/>
<rect x="754" y="258" width="4" height="4" fill="#00bafe"/>
<rect x="758" y="258" width="4" height="4" fill="#01aefe"/>
<rect x="762" y="258" width="4" height="4" fill="#5dabfe"/>
<rect x="766" y="258" width="4" height="4" fill="#83a7fe"/>
<rect x="770" y="258" width="4" height="4" fill="#9fa3fe"/>
<rect x="774" y="258" width="4" height="4" fill="#b89ffe"/>
<rect x="778" y="258" width="4" height="4" fill="#ce9bfe"/>
<rect x="782" y="258" width="4" height="4" fill="#e395fe"/>
<rect x="786" y="258" width="4" height="4" fill="#f790fe"/>
<rect x="790" y="258" width="4" height="4" fill="#fe83f3"/>
<rect x="794" y="258" width="4" height="4" fill="#fe73e3"/>
<rect x="798" y="258" width="4" height="4" fill="#fe64d5"/>
<rect x="802" y="258" width="4" height="4" fill="#fe55c8"/>
<rect x="806" y="258" width="4" height="4" fill="#fe46bd"/>
<rect x="810" y="258" width="4" height="4" fill="#fe35b3"/>
<rect x="814" y="258" width="4" height="4" fill="#fe1fa9"/>
<rect x="818" y="258" width="4" height="4" fill="#fe00a1"/>
<rect x="822" y="258" width="4" height="4" fill="#fe009b"/>
<rect x="826" y="258" width="4" height="4" fill="#fe0096"/>
<rect x="830" y="258" width="4" height="4" fill="#fe0091"/>
<rect x="834" y="258" width="4" height="4" fill="#fe008d"/>
<rect x="838" y="258" width="4" height="4" fill="#fe0089"/>
<rect x="842" y="258" width="4" height="4" fill="#fe0086"/>
<rect x="846" y="258" width="4" height="4" fill="#fe0082"/>
<rect x="850" y="258" width="4" height="4" fill="#fe007f"/>
<rect x="854" y="258" width="4" height="4" fill="#fe007d"/>
<rect x="858" y="258" width="4" height="4" fill="#fe007a"/>
<rect x="862" y="258" width="4" height="4" fill="#fe0077"/>
<rect x="866" y="258" width="4" height="4" fill="#fe0075"/>
<rect x="870" y="258" width="4" height="4" fill="#fe0073"/>
<rect x="726" y="262" width="4" height="4" fill="#00d7fe"/>
<rect x="730" y="262" width="4" height="4" fill="#00d3fe"/>
<rect x="734" y="262" width="4" height="4" fill="#00d0fe"/>
<rect x="738" y="262" width="4" height="4" fill="#00cbfe"/>
<rect x="742" y="262" width="4" height="4" fill="#00c6fe"/>
<rect x="746" y="262" width="4" height="4" fill="#00bffe"/>
<rect x="750" y="262" width="4" height="4" fill="#00b7fe"/>
<rect x="754" y="262" width="4" height="4" fill="#00acfe"/>
<rect x="758" y="262" width="4" height="4" fill="#31a0fe"/>
<rect x="762" y="262" width="4" height="4" fill="#679cfe"/>
<rect x="766" y="262" width="4" height="4" fill="#8998fe"/>
<rect x="770" y="262" width="4" height="4" fill="#a394fe"/>
<rect x="774" y="262" width="4" height="4" fill="#bb8efe"/>
<rect x="778" y="262" width="4" height="4" fill="#d089fe"/>
<rect x="782" y="262" width="4" height="4" fill="#e482fe"/>
<rect x="786" y="262" width="4" height="4" fill="#f77bfe"/>
<rect x="790" y="262" width="4" height="4" fill="#fe6df4"/>
<rect x="794" y="262" width="4" height="4" fill="#fe5de5"/>
<rect x="798" y="262" width="4" height="4" fill="#fe4cd7"/>
<rect x="802" y="262" width="4" height="4" fill="#fe3acb"/>
<rect x="806" y="262" width="4" height="4" fill="#fe23c0"/>
<rect x="810" y="262" width="4" height="4" fill="#fe00b6"/>
<rect x="814" y="262" width="4" height="4" fill="#fe00af"/>
<rect x="818" y="262" width="4" height="4" fill="#fe00a8"/>
<rect x="822" y="262" width="4" height="4" fill="#fe00a3"/>
<rect x="826" y="262" width="4" height="4" fill="#fe009e"/>
<rect x="830" y="262" width="4" height="4" fill="#fe0099"/>
<rect x="834" y="262" width="4" height="4" fill="#fe0095"/>
<rect x="838" y="262" width="4" height="4" fill="#fe0091"/>
<rect x="842" y="262" width="4" height="4" fill="#fe008d"/>
<rect x="846" y="262" width="4" height="4" fill="#fe008a"/>
<rect x="850" y="262" width="4" height="4" fill="#fe0087"/>
<rect x="854" y="262" width="4" height="4" fill="#fe0084"/>
<rect x="858" y="262" width="4" height="4" fill="#fe0081"/>
<rect x="730" y="266" width="4" height="4" fill="#00cdfe"/>
<rect x="734" y="266" width="4" height="4" fill="#00c8fe"/>
<rect x="738" y="266" width="4" height="4" fill="#00c3fe"/>
<rect x="742" y="266" width="4" height="4" fill="#00bcfe"/>
<rect x="746" y="266" width="4" height="4" fill="#00b4fe"/>
<rect x="750" y="266" width="4" height="4" fill="#00aafe"/>
<rect x="754" y="266" width="4" height="4" fill="#009cfe"/>
<rect x="758" y="266" width="4" height="4" fill="#4592fe"/>
<rect x="762" y="266" width="4" height="4" fill="#708efe"/>
<rect x="766" y="266" width="4" height="4" fill="#8e88fe"/>
<rect x="770" y="266" width="4" height="4" fill="#a783fe"/>
<rect x="774" y="266" width="4" height="4" fill="#bd7cfe"/>
<rect x="778" y="266" width="4" height="4" fill="#d175fe"/>
<rect x="782" y="266" width="4" height="4" fill="#e46dfe"/>
<rect x="786" y="266" width="4" height="4" fill="#f663fe"/>
<rect x="790" y="266" width="4" height="4" fill="#fe54f6"/>
<rect x="794" y="266" width="4" height="4" fill="#fe40e7"/>
<rect x="798" y="266" width="4" height="4" fill="#fe27d9"/>
<rect x="802" y="266" width="4" height="4" fill="#fe00cd"/>
<rect x="806" y="266" width="4" height="4" fill="#fe00c4"/>
<rect x="810" y="266" width="4" height="4" fill="#fe00bc"/>
<rect x="814" y="266" width="4" height="4" fill="#fe00b5"/>
<rect x="818" y="266" width="4" height="4" fill="#fe00af"/>
<rect x="822" y="266" width="4" height="4" fill="#fe00a9"/>
<rect x="826" y="266" width="4" height="4" fill="#fe00a4"/>
<rect x="830" y="266" width="4" height="4" fill="#fe009f"/>
<rect x="834" y="266" width="4" height="4" fill="#fe009b"/>
<rect x="838" y="266" width="4" height="4" fill="#fe0097"/>
<rect x="842" y="266" width="4" height="4" fill="#fe0094"/>
<rect x="846" y="266" width="4" height="4" fill="#fe0090"/>
<rect x="850" y="266" width="4" height="4" fill="#fe008d"/>
<rect x="730" y="270" width="4" height="4" fill="#00c5fe"/>
<rect x="734" y="270" width="4" height="4" fill="#00c0fe"/>
<rect x="738" y="270" width="4" height="4" fill="#00bafe"/>
<rect x="742" y="270" width="4" height="4" fill="#00b2fe"/>
<rect x="746" y="270" width="4" height="4" fill="#00a9fe"/>
<rect x="750" y="270" width="4" height="4" fill="#009cfe"/>
<rect x="754" y="270" width="4" height="4" fill="#008afe"/>
<rect x="758" y="270" width="4" height="4" fill="#5283fe"/>
<rect x="762" y="270" width="4" height="4" fill="#777efe"/>
<rect x="766" y="270" width="4" height="4" fill="#9377fe"/>
<rect x="770" y="270" width="4" height="4" fill="#aa70fe"/>
<rect x="774" y="270" width="4" height="4" fill="#bf68fe"/>
<rect x="778" y="270" width="4" height="4" fill="#d25ffe"/>
<rect x="782" y="270" width="4" height="4" fill="#e453fe"/>
<rect x="786" y="270" width="4" height="4" fill="#f544fe"/>
<rect x="790" y="270" width="4" height="4" fill="#fe2df7"/>
<rect x="794" y="270" width="4" height="4" fill="#fe00e8"/>
<rect x="798" y="270" width="4" height="4" fill="#fe00dc"/>
<rect x="802" y="270" width="4" height="4" fill="#fe00d2"/>
<rect x="806" y="270" width="4" height="4" fill="#fe00c9"/>
<rect x="810" y="270" width="4" height="4" fill="#fe00c1"/>
<rect x="814" y="270" width="4" height="4" fill="#fe00ba"/>
<rect x="818" y="270" width="4" height="4" fill="#fe00b4"/>
<rect x="822" y="270" width="4" height="4" fill="#fe00af"/>
<rect x="826" y="270" width="4" height="4" fill="#fe00aa"/>
<rect x="830" y="270" width="4" height="4" fill="#fe00a5"/>
<rect x="834" y="270" width="4" height="4" fill="#fe00a1"/>
<rect x="838" y="270" width="4" height="4" fill="#fe009d"/>
<rect x="842" y="270" width="4" height="4" fill="#fe0099"/>
<rect x="730" y="274" width="4" height="4" fill="#00befe"/>
<rect x="734" y="274" width="4" height="4" fill="#00b8fe"/>
<rect x="738" y="274" width="4" height="4" fill="#00b1fe"/>
<rect x="742" y="274" width="4" height="4" fill="#00a8fe"/>
<rect x="746" y="274" width="4" height="4" fill="#009cfe"/>
<rect x="750" y="274" width="4" height="4" fill="#008cfe"/>
<rect x="754" y="274" width="4" height="4" fill="#2479fe"/>
<rect x="758" y="274" width="4" height="4" fill="#5d73fe"/>
<rect x="762" y="274" width="4" height="4" fill="#7e6cfe"/>
<rect x="766" y="274" width="4" height="4" fill="#9764fe"/>
<rect x="770" y="274" width="4" height="4" fill="#ad5bfe"/>
<rect x="774" y="274" width="4" height="4" fill="#c150fe"/>
<rect x="778" y="274" width="4" height="4" fill="#d342fe"/>
<rect x="782" y="274" width="4" height="4" fill="#e42dfe"/>
<rect x="786" y="274" width="4" height="4" fill="#f500fe"/>
<rect x="790" y="274" width="4" height="4" fill="#fe00f8"/>
<rect x="794" y="274" width="4" height="4" fill="#fe00eb"/>
<rect x="798" y="274" width="4" height="4" fill="#fe00df"/>
<rect x="802" y="274" width="4" height="4" fill="#fe00d6"/>
<rect x="806" y="274" width="4" height="4" fill="#fe00cd"/>
<rect x="810" y="274" width="4" height="4" fill="#fe00c6"/>
<rect x="814" y="274" width="4" height="4" fill="#fe00bf"/>
<rect x="818" y="274" width="4" height="4" fill="#fe00b9"/>
<rect x="822" y="274" width="4" height="4" fill="#fe00b4"/>
<rect x="826" y="274" width="4" height="4" fill="#fe00af"/>
<rect x="830" y="274" width="4" height="4" fill="#fe00aa"/>
<rect x="734" y="278" width="4" height="4" fill="#00affe"/>
<rect x="738" y="278" width="4" height="4" fill="#00a7fe"/>
<rect x="742" y="278" width="4" height="4" fill="#009cfe"/>
<rect x="746" y="278" width="4" height="4" fill="#008efe"/>
<rect x="750" y="278" width="4" height="4" fill="#007afe"/>
<rect x="754" y="278" width="4" height="4" fill="#3a68fe"/>
<rect x="758" y="278" width="4" height="4" fill="#6661fe"/>
<rect x="762" y="278" width="4" height="4" fill="#8358fe"/>
<rect x="766" y="278" width="4" height="4" fill="#9b4dfe"/>
<rect x="770" y="278" width="4" height="4" fill="#af40fe"/>
<rect x="774" y="278" width="4" height="4" fill="#c22cfe"/>
<rect x="778" y="278" width="4" height="4" fill="#d400fe"/>
<rect x="782" y="278" width="4" height="4" fill="#e500fe"/>
<rect x="786" y="278" width="4" height="4" fill="#f500fe"/>
<rect x="790" y="278" width="4" height="4" fill="#fe00f9"/>
<rect x="794" y="278" width="4" height="4" fill="#fe00ed"/>
<rect x="798" y="278" width="4" height="4" fill="#fe00e2"/>
<rect x="802" y="278" width="4" height="4" fill="#fe00d9"/>
<rect x="806" y="278" width="4" height="4" fill="#fe00d1"/>
<rect x="810" y="278" width="4" height="4" fill="#fe00ca"/>
<rect x="814" y="278" width="4" height="4" fill="#fe00c3"/>
<rect x="818" y="278" width="4" height="4" fill="#fe00bd"/>
<rect x="822" y="278" width="4" height="4" fill="#fe00b8"/>
<rect x="734" y="282" width="4" height="4" fill="#00a6fe"/>
<rect x="738" y="282" width="4" height="4" fill="#009cfe"/>
<rect x="742" y="282" width="4" height="4" fill="#008ffe"/>
<rect x="746" y="282" width="4" height="4" fill="#007efe"/>
<rect x="750" y="282" width="4" height="4" fill="#0063fe"/>
<rect x="754" y="282" width="4" height="4" fill="#4955fe"/>
<rect x="758" y="282" width="4" height="4" fill="#6d4bfe"/>
<rect x="762" y="282" width="4" height="4" fill="#883efe"/>
<rect x="766" y="282" width="4" height="4" fill="#9e2bfe"/>
<rect x="770" y="282" width="4" height="4" fill="#b201fe"/>
<rect x="774" y="282" width="4" height="4" fill="#c600fe"/>
<rect x="778" y="282" width="4" height="4" fill="#d700fe"/>
<rect x="782" y="282" width="4" height="4" fill="#e700fe"/>
<rect x="786" y="282" width="4" height="4" fill="#f500fe"/>
<rect x="790" y="282" width="4" height="4" fill="#fe00fa"/>
<rect x="794" y="282" width="4" height="4" fill="#fe00ef"/>
<rect x="798" y="282" width="4" height="4" fill="#fe00e5"/>
<rect x="802" y="282" width="4" height="4" fill="#fe00dc"/>
<rect x="806" y="282" width="4" height="4" fill="#fe00d4"/>
<rect x="810" y="282" width="4" height="4" fill="#fe00cd"/>
<rect x="814" y="282" width="4" height="4" fill="#fe00c7"/>
<rect x="738" y="286" width="4" height="4" fill="#0090fe"/>
<rect x="742" y="286" width="4" height="4" fill="#0081fe"/>
<rect x="746" y="286" width="4" height="4" fill="#006bfe"/>
<rect x="750" y="286" width="4" height="4" fill="#1548fe"/>
<rect x="754" y="286" width="4" height="4" fill="#543cfe"/>
<rect x="758" y="286" width="4" height="4" fill="#742afe"/>
<rect x="762" y="286" width="4" height="4" fill="#8c04fe"/>
<rect x="766" y="286" width="4" height="4" fill="#a400fe"/>
<rect x="770" y="286" width="4" height="4" fill="#b800fe"/>
<rect x="774" y="286" width="4" height="4" fill="#ca00fe"/>
<rect x="778" y="286" width="4" height="4" fill="#da00fe"/>
<rect x="782" y="286" width="4" height="4" fill="#e800fe"/>
<rect x="786" y="286" width="4" height="4" fill="#f500fe"/>
<rect x="790" y="286" width="4" height="4" fill="#fe00fb"/>
<rect x="794" y="286" width="4" height="4" fill="#fe00f0"/>
<rect x="798" y="286" width="4" height="4" fill="#fe00e7"/>
<rect x="802" y="286" width="4" height="4" fill="#fe00de"/>
<rect x="738" y="290" width="4" height="4" fill="#0083fe"/>
<rect x="742" y="290" width="4" height="4" fill="#0070fe"/>
<rect x="746" y="290" width="4" height="4" fill="#0052fe"/>
<rect x="750" y="290" width="4" height="4" fill="#312afe"/>
<rect x="754" y="290" width="4" height="4" fill="#5d07fe"/>
<rect x="758" y="290" width="4" height="4" fill="#7e00fe"/>
<rect x="762" y="290" width="4" height="4" fill="#9700fe"/>
<rect x="766" y="290" width="4" height="4" fill="#ac00fe"/>
<rect x="770" y="290" width="4" height="4" fill="#be00fe"/>
<rect x="774" y="290" width="4" height="4" fill="#cd00fe"/>
<rect x="778" y="290" width="4" height="4" fill="#dc00fe"/>
<rect x="782" y="290" width="4" height="4" fill="#e900fe"/>
<rect x="786" y="290" width="4" height="4" fill="#f500fe"/>
<rect x="790" y="290" width="4" height="4" fill="#fe00fc"/>
<rect x="794" y="290" width="4" height="4" fill="#fe00f2"/>
<rect x="738" y="294" width="4" height="4" fill="#0074fe"/>
<rect x="742" y="294" width="4" height="4" fill="#005cfe"/>
<rect x="746" y="294" width="4" height="4" fill="#002cfe"/>
<rect x="750" y="294" width="4" height="4" fill="#4a00fe"/>
<rect x="754" y="294" width="4" height="4" fill="#7000fe"/>
<rect x="758" y="294" width="4" height="4" fill="#8b00fe"/>
<rect x="762" y="294" width="4" height="4" fill="#a000fe"/>
<rect x="766" y="294" width="4" height="4" fill="#b200fe"/>
<rect x="770" y="294" width="4" height="4" fill="#c200fe"/>
<rect x="774" y="294" width="4" height="4" fill="#d000fe"/>
<rect x="778" y="294" width="4" height="4" fill="#de00fe"/>
<rect x="782" y="294" width="4" height="4" fill="#ea00fe"/>
<rect x="786" y="294" width="4" height="4" fill="#f500fe"/>
<rect x="742" y="298" width="4" height="4" fill="#0040fe"/>
<rect x="746" y="298" width="4" height="4" fill="#3300fe"/>
<rect x="750" y="298" width="4" height="4" fill="#6200fe"/>
<rect x="754" y="298" width="4" height="4" fill="#7e00fe"/>
<rect x="758" y="298" width="4" height="4" fill="#9400fe"/>
<rect x="762" y="298" width="4" height="4" fill="#a700fe"/>
<rect x="766" y="298" width="4" height="4" fill="#b700fe"/>
<rect x="770" y="298" width="4" height="4" fill="#c600fe"/>
<rect x="774" y="298" width="4" height="4" fill="#d300fe"/>
<rect x="778" y="298" width="4" height="4" fill="#df00fe"/>
<rect x="746" y="302" width="4" height="4" fill="#5200fe"/>
<rect x="750" y="302" width="4" height="4" fill="#7200fe"/>
<rect x="754" y="302" width="4" height="4" fill="#8900fe"/>
<rect x="758" y="302" width="4" height="4" fill="#9c00fe"/>
<rect x="762" y="302" width="4" height="4" fill="#ad00fe"/>
<rect x="766" y="302" width="4" height="4" fill="#bc00fe"/>
<rect x="750" y="306" width="4" height="4" fill="#7e00fe"/>
<rect x="754" y="306" width="4" height="4" fill="#9200fe"/>
<rect x="758" y="306" width="4" height="4" fill="#a300fe"/>
</g>
<polyline points="755.1,307.9 755.0,307.9 754.9,307.9 754.7,307.9 754.5,307.9 754.2,307.7 753.9,307.5 753.4,307.1 752.8,306.6 752.0,305.9 750.9,305.1 749.6,303.9 747.9,302.4 745.9,300.1 743.1,296.1 739.6,289.7 735.3,279.5 729.9,264.3 724.3,243.3 719.0,217.1 715.4,189.2 714.3,163.2 716.7,142.0 722.7,128.2 731.2,123.4 740.8,125.1 750.5,129.6 759.6,135.0 768.4,141.1 777.1,147.8 785.6,154.9 794.2,162.3 802.8,170.0 811.3,177.8 819.8,185.5 828.1,193.2 836.1,200.7 843.9,207.9 851.2,214.6 857.8,220.7 863.6,226.1 868.6,230.8 872.9,234.7 876.3,237.8 879.0,240.4 881.2,242.4 882.9,244.0 884.4,245.4 885.6,246.5 886.6,247.3 887.3,248.0 887.8,248.5 888.2,248.9 888.5,249.1 888.7,249.3 888.9,249.5 889.0,249.7 889.3,249.9 889.4,249.9" fill="none" stroke="#101010" stroke-width="1.1" shape-rendering="geometricPrecision"/>
</svg></noscript>
<canvas id="cie" width="308" height="258"></canvas>
<svg width="1123" height="595" viewBox="0 0 1123 595" text-rendering="geometricPrecision">
<g stroke="#1a1a6e" stroke-width="0.25">
<text x="722.80" y="118.8" font-size="9" fill="#1a1a6e" font-family='"Liberation Serif",serif' textLength="13.80" lengthAdjust="spacingAndGlyphs">520</text>
<text x="771.70" y="137.6" font-size="9" fill="#1a1a6e" font-family='"Liberation Serif",serif' textLength="13.80" lengthAdjust="spacingAndGlyphs">540</text>
<text x="805.10" y="166.7" font-size="9" fill="#1a1a6e" font-family='"Liberation Serif",serif' textLength="14.90" lengthAdjust="spacingAndGlyphs">560</text>
<text x="839.30" y="197.1" font-size="9" fill="#1a1a6e" font-family='"Liberation Serif",serif' textLength="14.20" lengthAdjust="spacingAndGlyphs">580</text>
<text x="867.00" y="222.6" font-size="9" fill="#1a1a6e" font-family='"Liberation Serif",serif' textLength="14.30" lengthAdjust="spacingAndGlyphs">600</text>
<text x="882.30" y="236.6" font-size="9" fill="#1a1a6e" font-family='"Liberation Serif",serif' textLength="12.40" lengthAdjust="spacingAndGlyphs">620</text>
<text x="715.80" y="284" font-size="9" fill="#1a1a6e" font-family='"Liberation Serif",serif' textLength="14.00" lengthAdjust="spacingAndGlyphs">480</text>
<text x="729.00" y="308.7" font-size="9" fill="#1a1a6e" font-family='"Liberation Serif",serif' textLength="13.40" lengthAdjust="spacingAndGlyphs">460</text>
</g>
</svg>
<script>
(function(){
var cv=document.getElementById('cie'),c=cv.getContext('2d');
var OX=643,OY=93;
function PX(x){return 713.4+239.5*x-OX;}
function PY(y){return 309.0-222.6*y-OY;}
var L=[[380,.1741,.0050],[390,.1738,.0049],[400,.1733,.0048],[410,.1726,.0048],[420,.1714,.0051],[425,.1703,.0058],[430,.1689,.0069],[435,.1669,.0086],[440,.1644,.0109],[445,.1611,.0138],[450,.1566,.0177],[455,.1510,.0227],[460,.1440,.0297],[465,.1355,.0399],[470,.1241,.0578],[475,.1096,.0868],[480,.0913,.1327],[485,.0687,.2007],[490,.0454,.2950],[495,.0235,.4127],[500,.0082,.5384],[505,.0039,.6548],[510,.0139,.7502],[515,.0389,.8120],[520,.0743,.8338],[525,.1142,.8262],[530,.1547,.8059],[535,.1929,.7816],[540,.2296,.7543],[545,.2658,.7243],[550,.3016,.6923],[555,.3373,.6589],[560,.3731,.6245],[565,.4087,.5896],[570,.4441,.5547],[575,.4788,.5202],[580,.5125,.4866],[585,.5448,.4544],[590,.5752,.4242],[595,.6029,.3965],[600,.6270,.3725],[605,.6482,.3514],[610,.6658,.3340],[615,.6801,.3197],[620,.6915,.3083],[625,.7006,.2993],[630,.7079,.2920],[635,.7140,.2859],[640,.7190,.2809],[645,.7230,.2770],[650,.7260,.2740],[655,.7283,.2717],[660,.7300,.2700],[665,.7311,.2689],[670,.7320,.2680],[675,.7327,.2673],[680,.7334,.2666],[690,.7344,.2656],[700,.7347,.2653]];
var P=[];for(var n=0;n<L.length;n++)P.push([PX(L[n][1]),PY(L[n][2])]);
var S=[];
for(var n=0;n<P.length-1;n++){var p0=P[Math.max(n-1,0)],p1=P[n],p2=P[n+1],p3=P[Math.min(n+2,P.length-1)];
 for(var t=0;t<4;t++){var u=t/4,u2=u*u,u3=u2*u;
  S.push([0.5*((2*p1[0])+(-p0[0]+p2[0])*u+(2*p0[0]-5*p1[0]+4*p2[0]-p3[0])*u2+(-p0[0]+3*p1[0]-3*p2[0]+p3[0])*u3),
          0.5*((2*p1[1])+(-p0[1]+p2[1])*u+(2*p0[1]-5*p1[1]+4*p2[1]-p3[1])*u2+(-p0[1]+3*p1[1]-3*p2[1]+p3[1])*u3)]);}}
S.push(P[P.length-1]);
function locus(){c.beginPath();for(var n=0;n<S.length;n++){if(n==0)c.moveTo(S[n][0],S[n][1]);else c.lineTo(S[n][0],S[n][1]);}}
// grid
c.save();
c.beginPath();
c.moveTo(PX(0),PY(0));c.lineTo(PX(0),PY(.9));c.lineTo(PX(.1),PY(.9));c.lineTo(PX(.8),PY(.2));c.lineTo(PX(.8),PY(0));c.closePath();
c.strokeStyle='#e9e9e9';c.lineWidth=1;c.stroke();
c.clip();
c.beginPath();
for(var k=1;k<=16;k++){var x=Math.round(PX(k*.05))+.5;c.moveTo(x,0);c.lineTo(x,300);}
for(var k=1;k<=18;k++){var y=Math.round(PY(k*.05))+.5;c.moveTo(0,y);c.lineTo(400,y);}
c.stroke();
c.restore();
// axis
c.fillStyle='#7a7a7a';c.fillRect(713-OX,109-OY,1,200);
// fill
var W=cv.width,H=cv.height;
var off=document.createElement('canvas');off.width=W;off.height=H;
var oc=off.getContext('2d');var im=oc.createImageData(W,H);var d=im.data;
function g(v){v=Math.max(0,Math.min(1,v));return v<=0.0031308?12.92*v:1.055*Math.pow(v,1/2.4)-0.055;}
var R=new Float32Array(W*H),G=new Float32Array(W*H),B=new Float32Array(W*H);
for(var j=0;j<H;j++){for(var i=0;i<W;i++){
  var x=(i+.5+OX-713.4)/239.5,y=(309.0-(j+.5+OY))/222.6;
  x=Math.max(0,Math.min(.74,x));y=Math.max(.004,Math.min(.84,y));
  var X=x/y,Y=1,Z=(1-x-y)/y;
  var r=3.2406*X-1.5372*Y-0.4986*Z,gg=-0.9689*X+1.8758*Y+0.0415*Z,b=0.0557*X-0.2040*Y+1.0570*Z;
  var mn=Math.min(r,gg,b);if(mn<0){r-=mn;gg-=mn;b-=mn;}
  var m=Math.max(r,gg,b);if(m<=0)m=1;
  var p=j*W+i;R[p]=g(r/m);G[p]=g(gg/m);B[p]=g(b/m);
}}
function blur(A,rad){var T=new Float32Array(W*H);
 for(var j=0;j<H;j++){for(var i=0;i<W;i++){var s=0,n=0;for(var k=-rad;k<=rad;k++){var ii=i+k;if(ii<0||ii>=W)continue;s+=A[j*W+ii];n++;}T[j*W+i]=s/n;}}
 for(var i=0;i<W;i++){for(var j=0;j<H;j++){var s=0,n=0;for(var k=-rad;k<=rad;k++){var jj=j+k;if(jj<0||jj>=H)continue;s+=T[jj*W+i];n++;}A[j*W+i]=s/n;}}}
for(var pass=0;pass<2;pass++){blur(R,4);blur(G,4);blur(B,4);}
for(var p=0;p<W*H;p++){d[p*4]=255*R[p];d[p*4+1]=255*G[p];d[p*4+2]=255*B[p];d[p*4+3]=255;}
oc.putImageData(im,0,0);
c.save();locus();c.closePath();c.clip();c.drawImage(off,0,0);c.restore();
// outline
locus();
c.strokeStyle='#101010';c.lineWidth=1.1;c.stroke();
c.beginPath();c.moveTo(S[0][0],S[0][1]);c.lineTo(S[S.length-1][0],S[S.length-1][1]);c.strokeStyle='rgba(40,0,30,0.55)';c.lineWidth=0.8;c.stroke();
// ticks
c.lineWidth=0.7;c.strokeStyle='#444';
var cx=PX(.33),cy=PY(.33);
function tick(n,len){var q=P[n],a=P[Math.max(n-1,0)],b=P[Math.min(n+1,P.length-1)];
  var x=q[0],y=q[1];var dx=b[0]-a[0],dy=b[1]-a[1];var l=Math.hypot(dx,dy)||1;
  var nx=dy/l,ny=-dx/l; if((x-cx)*nx+(y-cy)*ny<0){nx=-nx;ny=-ny;}
  c.beginPath();c.moveTo(x,y);c.lineTo(x+nx*len,y+ny*len);c.stroke();}
for(var n=0;n<L.length;n++){var w=L[n][0];if(w>=450&&w<=700){tick(n,(w%20==0)?4:2.5);}}
})();

</script>
</body></html>
